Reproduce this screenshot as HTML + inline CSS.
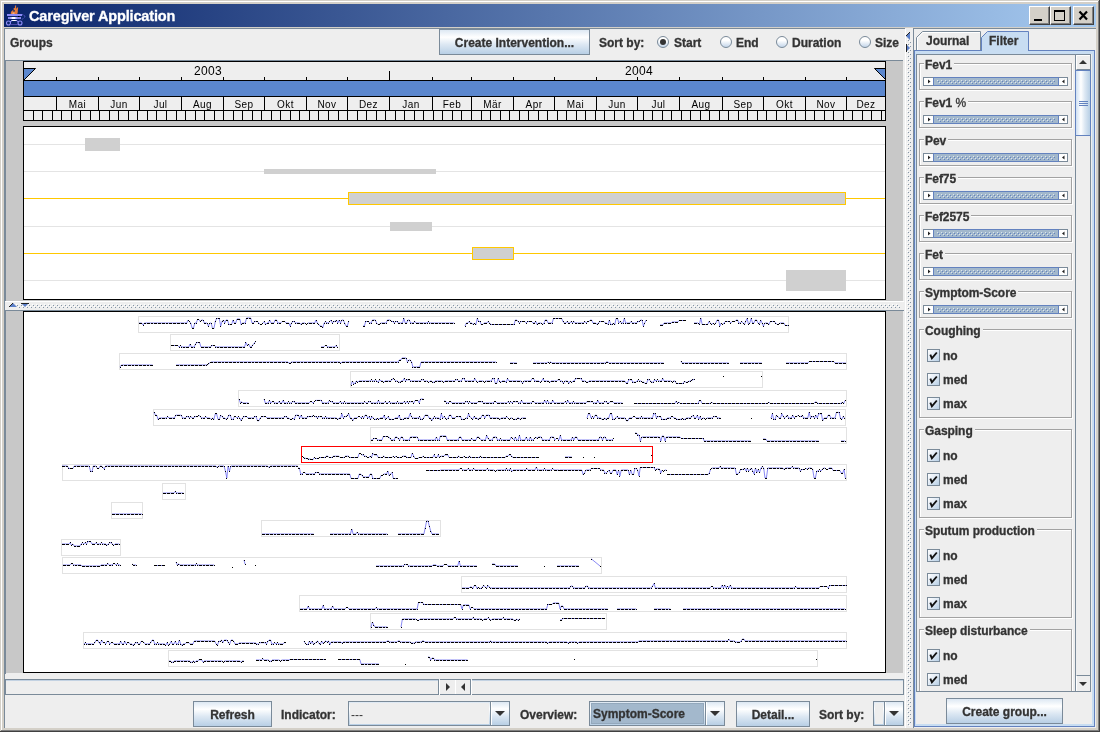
<!DOCTYPE html><html><head><meta charset="utf-8"><title>Caregiver Application</title><style>
*{box-sizing:border-box;margin:0;padding:0}
html,body{width:1100px;height:732px;overflow:hidden;background:#d4d0c8}
body{position:relative;font-family:"Liberation Sans",sans-serif;font-size:12px;font-weight:bold;color:#333;-webkit-text-stroke-width:0.3px}
.a{position:absolute}
.t{position:absolute;white-space:nowrap;line-height:14px;height:14px}
.btn{position:absolute;border:1px solid #7a8a99;background:linear-gradient(to bottom,#dde8f3 0%,#fff 30%,#dde8f3 60%,#b8cfe5 100%);text-align:center}
.btn span{position:absolute;left:0;right:0;white-space:nowrap}
.radio{position:absolute;width:12px;height:12px;border-radius:50%;border:1px solid #7a8a99;background:linear-gradient(to bottom,#fff 0%,#fff 35%,#c4d6ea 100%)}
.radio.on:after{content:"";position:absolute;left:2px;top:2px;width:6px;height:6px;border-radius:50%;background:#333}
.grp{position:absolute;left:920px;width:153px;border:1px solid #fff;}
.grp:before{content:"";position:absolute;left:-2px;top:-2px;right:0;bottom:0;border:1px solid #a2a2a2}
.grp b{position:absolute;left:3px;top:-7px;background:#eee;padding:0 2px 0 1px;line-height:14px;height:14px;font-weight:bold;white-space:nowrap;letter-spacing:-0.05px}
.grp b i{font-style:normal;font-weight:normal}
.cb{position:absolute;left:927px;width:13px;height:13px;border:1px solid #7a8a99;background:linear-gradient(135deg,#fff 0%,#e6eef7 40%,#b8cfe5 100%)}
.cbl{position:absolute;left:943px;white-space:nowrap;line-height:14px}
</style></head><body><div class="a" id="root" style="left:0;top:0;width:1100px;height:732px;will-change:transform;transform:translateZ(0)">
<div class="a" style="left:0px;top:0px;width:1100px;height:732px;background:#d4d0c8;"></div>
<div class="a" style="left:1px;top:1px;width:1097px;height:1px;background:#fff;"></div>
<div class="a" style="left:1px;top:1px;width:1px;height:729px;background:#fff;"></div>
<div class="a" style="left:1098px;top:1px;width:1px;height:730px;background:#808080;"></div>
<div class="a" style="left:1px;top:730px;width:1098px;height:1px;background:#808080;"></div>
<div class="a" style="left:1099px;top:0px;width:1px;height:732px;background:#404040;"></div>
<div class="a" style="left:0px;top:731px;width:1100px;height:1px;background:#404040;"></div>
<div class="a" style="left:4px;top:4px;width:1092px;height:23px;background:linear-gradient(to right,#0a246a 0%,#a6caf0 100%);"></div>
<div class="t" style="left:29px;top:7px;color:#fff;font-size:14.5px;line-height:19px;height:19px;letter-spacing:-0.15px">Caregiver Application</div>
<svg class="a" style="left:5px;top:5px" width="22" height="21" viewBox="0 0 22 21">
<path d="M6 9.500C5 7 7.500 5 9 4.500L8.500 3H9.800L10 0.500H11.200L11 4L12 2.500H13.200L12.800 5.500C13 7 12.500 8.500 12 9.500Z" fill="#e07a3a"/>
<path d="M7.500 7.500h2v2h-2z" fill="#f4b080"/><path d="M8 5.200h2v1.300h-2z" fill="#16306e"/>
<rect x="2" y="9" width="15" height="2" fill="#8c8cf8"/>
<rect x="3" y="12" width="13" height="2" fill="#8888f0"/><rect x="5.500" y="12" width="6" height="2" fill="#c8c8ff"/><rect x="7" y="12" width="3" height="2" fill="#fff"/>
<rect x="13" y="11" width="1.500" height="1" fill="#000"/>
<rect x="6" y="15" width="6" height="1" fill="#d8d8ff"/><rect x="7.500" y="15" width="3" height="1" fill="#fff"/>
<path d="M17 9.500L19.500 10.500L20 12L18.500 13.500L16.500 14.500" stroke="#5c5ccc" stroke-width="1" fill="none" stroke-dasharray="1 0.700"/>
<circle cx="3.500" cy="18" r="2" stroke="#8c8cf8" stroke-width="1.100" fill="none"/><circle cx="15" cy="18" r="2" stroke="#8c8cf8" stroke-width="1.100" fill="none"/>
<path d="M5.500 19.500H13" stroke="#4a4aa8" stroke-width="1"/><path d="M5 16.800L7 15.600M13.500 16.800L11.500 15.600" stroke="#8c8cf8" stroke-width="1"/>
</svg>
<div class="a" style="left:1029px;top:6px;width:21px;height:19px;background:#d4d0c8;border:1px solid;border-color:#fff #404040 #404040 #fff;box-shadow:inset -1px -1px 0 #808080"></div>
<div class="a" style="left:1034px;top:19px;width:8px;height:2px;background:#000;"></div>
<div class="a" style="left:1050px;top:6px;width:21px;height:19px;background:#d4d0c8;border:1px solid;border-color:#fff #404040 #404040 #fff;box-shadow:inset -1px -1px 0 #808080"></div>
<div class="a" style="left:1054px;top:10px;width:11px;height:11px;border:1px solid #000;border-top-width:2px"></div>
<div class="a" style="left:1073px;top:6px;width:21px;height:19px;background:#d4d0c8;border:1px solid;border-color:#fff #404040 #404040 #fff;box-shadow:inset -1px -1px 0 #808080"></div>
<svg class="a" style="left:1078px;top:10px" width="12" height="11" viewBox="0 0 12 11"><path d="M1.500 1.500l7.500 8M9 1.500l-7.500 8" stroke="#000" stroke-width="2.200" fill="none"/></svg>
<div class="a" style="left:4px;top:28px;width:1092px;height:700px;background:#eee;"></div>
<div class="a" style="left:4px;top:28px;width:901px;height:1px;background:#7a8a99;"></div>
<div class="a" style="left:4px;top:28px;width:1px;height:700px;background:#7a8a99;"></div>
<div class="t" style="left:10px;top:36px;">Groups</div>
<div class="btn" style="left:439px;top:29px;width:151px;height:26px"><span style="top:6px;line-height:14px">Create Intervention...</span></div>
<div class="t" style="left:599px;top:36px;">Sort by:</div>
<div class="radio on" style="left:657px;top:36px"></div>
<div class="t" style="left:674px;top:36px;">Start</div>
<div class="radio" style="left:720px;top:36px"></div>
<div class="t" style="left:736px;top:36px;">End</div>
<div class="radio" style="left:776px;top:36px"></div>
<div class="t" style="left:792px;top:36px;">Duration</div>
<div class="radio" style="left:859px;top:36px"></div>
<div class="t" style="left:875px;top:36px;">Size</div>
<div class="a" style="left:5px;top:60px;width:898px;height:1px;background:#7a8a99;"></div>
<div class="a" style="left:5px;top:60px;width:1px;height:241px;background:#7a8a99;"></div>
<div class="a" style="left:6px;top:61px;width:897px;height:240px;background:#c8c8c8;"></div>
<div class="a" style="left:23px;top:61px;width:863px;height:60px;background:#000;"></div>
<div class="a" style="left:24px;top:62px;width:861px;height:18px;background:#eee;"></div>
<div class="a" style="left:24px;top:81px;width:861px;height:15px;background:#5b87ce;"></div>
<div class="a" style="left:24px;top:97px;width:861px;height:13px;background:#eee;"></div>
<div class="a" style="left:24px;top:111px;width:861px;height:9px;background:#eee;"></div>
<svg class="a" style="left:0;top:0" width="905" height="125" shape-rendering="crispEdges"><path d="M56.5 77V80M56.5 97V110M98.5 77V80M98.5 97V110M139.5 77V80M139.5 97V110M181.5 77V80M181.5 97V110M223.5 77V80M223.5 97V110M264.5 77V80M264.5 97V110M306.5 77V80M306.5 97V110M347.5 77V80M347.5 97V110M389.5 71V80M389.5 97V110M432.5 77V80M432.5 97V110M471.5 77V80M471.5 97V110M513.5 77V80M513.5 97V110M554.5 77V80M554.5 97V110M596.5 77V80M596.5 97V110M637.5 77V80M637.5 97V110M679.5 77V80M679.5 97V110M722.5 77V80M722.5 97V110M763.5 77V80M763.5 97V110M805.5 77V80M805.5 97V110M846.5 77V80M846.5 97V110M33.5 111V120M42.5 111V120M52.5 111V120M61.5 111V120M71.5 111V120M80.5 111V120M90.5 111V120M99.5 111V120M109.5 111V120M118.5 111V120M128.5 111V120M137.5 111V120M147.5 111V120M156.5 111V120M166.5 111V120M176.5 111V120M185.5 111V120M195.5 111V120M204.5 111V120M214.5 111V120M223.5 111V120M233.5 111V120M242.5 111V120M252.5 111V120M261.5 111V120M271.5 111V120M280.5 111V120M290.5 111V120M299.5 111V120M309.5 111V120M318.5 111V120M328.5 111V120M338.5 111V120M347.5 111V120M357.5 111V120M366.5 111V120M376.5 111V120M385.5 111V120M395.5 111V120M404.5 111V120M414.5 111V120M423.5 111V120M433.5 111V120M442.5 111V120M452.5 111V120M461.5 111V120M471.5 111V120M481.5 111V120M490.5 111V120M500.5 111V120M509.5 111V120M519.5 111V120M528.5 111V120M538.5 111V120M547.5 111V120M557.5 111V120M566.5 111V120M576.5 111V120M585.5 111V120M595.5 111V120M604.5 111V120M614.5 111V120M624.5 111V120M633.5 111V120M643.5 111V120M652.5 111V120M662.5 111V120M671.5 111V120M681.5 111V120M690.5 111V120M700.5 111V120M709.5 111V120M719.5 111V120M728.5 111V120M738.5 111V120M747.5 111V120M757.5 111V120M766.5 111V120M776.5 111V120M786.5 111V120M795.5 111V120M805.5 111V120M814.5 111V120M824.5 111V120M833.5 111V120M843.5 111V120M852.5 111V120M862.5 111V120M871.5 111V120M881.5 111V120" stroke="#000" stroke-width="1" fill="none"/><path d="M24 68H36L24 80Z" fill="#5b87ce" stroke="none" shape-rendering="geometricPrecision"/><path d="M24 68.500H35.500L24 80" fill="none" stroke="#000" stroke-width="1" shape-rendering="geometricPrecision"/><path d="M885 68H874L885 79Z" fill="#5b87ce" stroke="none" shape-rendering="geometricPrecision"/><path d="M885 68.500H874.500L885 79" fill="none" stroke="#000" stroke-width="1" shape-rendering="geometricPrecision"/></svg>
<div class="t" style="left:57px;top:98px;width:41px;text-align:center;-webkit-text-stroke-width:0;font-weight:normal;font-size:10px;line-height:13px;height:13px;color:#000;letter-spacing:0.4px">Mai</div>
<div class="t" style="left:99px;top:98px;width:40px;text-align:center;-webkit-text-stroke-width:0;font-weight:normal;font-size:10px;line-height:13px;height:13px;color:#000;letter-spacing:0.4px">Jun</div>
<div class="t" style="left:140px;top:98px;width:41px;text-align:center;-webkit-text-stroke-width:0;font-weight:normal;font-size:10px;line-height:13px;height:13px;color:#000;letter-spacing:0.4px">Jul</div>
<div class="t" style="left:182px;top:98px;width:41px;text-align:center;-webkit-text-stroke-width:0;font-weight:normal;font-size:10px;line-height:13px;height:13px;color:#000;letter-spacing:0.4px">Aug</div>
<div class="t" style="left:224px;top:98px;width:40px;text-align:center;-webkit-text-stroke-width:0;font-weight:normal;font-size:10px;line-height:13px;height:13px;color:#000;letter-spacing:0.4px">Sep</div>
<div class="t" style="left:265px;top:98px;width:41px;text-align:center;-webkit-text-stroke-width:0;font-weight:normal;font-size:10px;line-height:13px;height:13px;color:#000;letter-spacing:0.4px">Okt</div>
<div class="t" style="left:307px;top:98px;width:40px;text-align:center;-webkit-text-stroke-width:0;font-weight:normal;font-size:10px;line-height:13px;height:13px;color:#000;letter-spacing:0.4px">Nov</div>
<div class="t" style="left:348px;top:98px;width:41px;text-align:center;-webkit-text-stroke-width:0;font-weight:normal;font-size:10px;line-height:13px;height:13px;color:#000;letter-spacing:0.4px">Dez</div>
<div class="t" style="left:390px;top:98px;width:42px;text-align:center;-webkit-text-stroke-width:0;font-weight:normal;font-size:10px;line-height:13px;height:13px;color:#000;letter-spacing:0.4px">Jan</div>
<div class="t" style="left:433px;top:98px;width:38px;text-align:center;-webkit-text-stroke-width:0;font-weight:normal;font-size:10px;line-height:13px;height:13px;color:#000;letter-spacing:0.4px">Feb</div>
<div class="t" style="left:472px;top:98px;width:41px;text-align:center;-webkit-text-stroke-width:0;font-weight:normal;font-size:10px;line-height:13px;height:13px;color:#000;letter-spacing:0.4px">Mär</div>
<div class="t" style="left:514px;top:98px;width:40px;text-align:center;-webkit-text-stroke-width:0;font-weight:normal;font-size:10px;line-height:13px;height:13px;color:#000;letter-spacing:0.4px">Apr</div>
<div class="t" style="left:555px;top:98px;width:41px;text-align:center;-webkit-text-stroke-width:0;font-weight:normal;font-size:10px;line-height:13px;height:13px;color:#000;letter-spacing:0.4px">Mai</div>
<div class="t" style="left:597px;top:98px;width:40px;text-align:center;-webkit-text-stroke-width:0;font-weight:normal;font-size:10px;line-height:13px;height:13px;color:#000;letter-spacing:0.4px">Jun</div>
<div class="t" style="left:638px;top:98px;width:41px;text-align:center;-webkit-text-stroke-width:0;font-weight:normal;font-size:10px;line-height:13px;height:13px;color:#000;letter-spacing:0.4px">Jul</div>
<div class="t" style="left:680px;top:98px;width:42px;text-align:center;-webkit-text-stroke-width:0;font-weight:normal;font-size:10px;line-height:13px;height:13px;color:#000;letter-spacing:0.4px">Aug</div>
<div class="t" style="left:723px;top:98px;width:40px;text-align:center;-webkit-text-stroke-width:0;font-weight:normal;font-size:10px;line-height:13px;height:13px;color:#000;letter-spacing:0.4px">Sep</div>
<div class="t" style="left:764px;top:98px;width:41px;text-align:center;-webkit-text-stroke-width:0;font-weight:normal;font-size:10px;line-height:13px;height:13px;color:#000;letter-spacing:0.4px">Okt</div>
<div class="t" style="left:806px;top:98px;width:40px;text-align:center;-webkit-text-stroke-width:0;font-weight:normal;font-size:10px;line-height:13px;height:13px;color:#000;letter-spacing:0.4px">Nov</div>
<div class="t" style="left:847px;top:98px;width:38px;text-align:center;-webkit-text-stroke-width:0;font-weight:normal;font-size:10px;line-height:13px;height:13px;color:#000;letter-spacing:0.4px">Dez</div>
<div class="t" style="left:188px;top:64px;width:40px;text-align:center;font-weight:normal;color:#000;letter-spacing:0.3px;-webkit-text-stroke-width:0">2003</div>
<div class="t" style="left:619px;top:64px;width:40px;text-align:center;font-weight:normal;color:#000;letter-spacing:0.3px;-webkit-text-stroke-width:0">2004</div>
<div class="a" style="left:23px;top:126px;width:863px;height:174px;background:#000;"></div>
<div class="a" style="left:24px;top:127px;width:861px;height:172px;background:#fff;"></div>
<div class="a" style="left:24px;top:144px;width:861px;height:1px;background:#e4e4e4;"></div>
<div class="a" style="left:24px;top:171px;width:861px;height:1px;background:#e4e4e4;"></div>
<div class="a" style="left:24px;top:226px;width:861px;height:1px;background:#e4e4e4;"></div>
<div class="a" style="left:24px;top:280px;width:861px;height:1px;background:#e4e4e4;"></div>
<div class="a" style="left:24px;top:198px;width:861px;height:1px;background:#ffc800;"></div>
<div class="a" style="left:24px;top:253px;width:861px;height:1px;background:#ffc800;"></div>
<div class="a" style="left:85px;top:138px;width:35px;height:13px;background:#d0d0d0;"></div>
<div class="a" style="left:264px;top:169px;width:172px;height:5px;background:#d0d0d0;"></div>
<div class="a" style="left:348px;top:192px;width:498px;height:13px;background:#d0d0d0;border:1px solid #ffc800"></div>
<div class="a" style="left:390px;top:222px;width:42px;height:9px;background:#d0d0d0;"></div>
<div class="a" style="left:472px;top:247px;width:42px;height:13px;background:#d0d0d0;border:1px solid #ffc800"></div>
<div class="a" style="left:786px;top:270px;width:60px;height:21px;background:#d0d0d0;"></div>
<svg class="a" style="left:5px;top:301px" width="899" height="9" shape-rendering="crispEdges"><defs><pattern id="dp" x="11" y="3" width="4" height="4" patternUnits="userSpaceOnUse"><rect x="1" y="1" width="1" height="1" fill="#8494a5"/><rect x="0" y="0" width="1" height="1" fill="#fff"/><rect x="3" y="3" width="1" height="1" fill="#8494a5"/><rect x="2" y="2" width="1" height="1" fill="#fff"/></pattern></defs><rect width="899" height="9" fill="#eee"/><rect width="899" height="1" fill="#fff"/><rect x="11" y="3" width="884" height="4" fill="url(#dp)"/><g shape-rendering="geometricPrecision"><path d="M4 6L8 2L12 6Z" fill="#5b7fc8"/><path d="M4 6L8 2" stroke="#222" stroke-width="1" fill="none"/><path d="M16 2H24L20 6Z" fill="#5b7fc8"/><path d="M16 2.500H24" stroke="#222" stroke-width="1" fill="none"/></g></svg>
<div class="a" style="left:5px;top:310px;width:899px;height:1px;background:#7a8a99;"></div>
<div class="a" style="left:5px;top:310px;width:1px;height:364px;background:#7a8a99;"></div>
<div class="a" style="left:6px;top:311px;width:897px;height:362px;background:#c8c8c8;"></div>
<div class="a" style="left:23px;top:311px;width:863px;height:362px;background:#000;"></div>
<div class="a" style="left:24px;top:312px;width:861px;height:360px;background:#fff;"></div>
<svg class="a" style="left:0;top:311px" width="905" height="362" viewBox="0 311 905 362"><path d="M138.5 316.5H788.5V332.5H138.5ZM170.5 334.5H339.5V350.5H170.5ZM119.5 353.5H846.5V369.5H119.5ZM350.5 371.5H762.5V387.5H350.5ZM238.5 390.5H846.5V406.5H238.5ZM153.5 409.5H845.5V425.5H153.5ZM370.5 427.5H846.5V443.5H370.5ZM62.5 464.5H846.5V480.5H62.5ZM162.5 483.5H185.5V499.5H162.5ZM111.5 502.5H142.5V518.5H111.5ZM261.5 520.5H440.5V536.5H261.5ZM61.5 539.5H120.5V555.5H61.5ZM62.5 557.5H601.5V573.5H62.5ZM461.5 576.5H846.5V592.5H461.5ZM299.5 595.5H846.5V611.5H299.5ZM370.5 613.5H606.5V629.5H370.5ZM83.5 632.5H846.5V648.5H83.5ZM168.5 650.5H817.5V666.5H168.5Z" stroke="#e2e2e2" fill="none" shape-rendering="crispEdges"/><path d="M301.5 446.5H652.5V462.5H301.5Z" stroke="#f00" fill="none" shape-rendering="crispEdges"/><path d="M139 323L141.7 323L143.1 325L144.4 323L186.7 323L188 320L189.4 321.5L190.7 323L192.1 328L193.5 328L194.8 323L196.2 323L197.6 319.5L198.9 319.5L200.3 321.5L201.6 320L203 320L204.4 323L207.1 323L208.4 326L209.8 323L211.2 323L212.5 328.5L213.9 328.5L215.3 321.5L216.6 318.5L219.3 318.5L220.7 326L222.1 321.5L223.4 320L224.8 323L226.1 320L227.5 320L228.9 324.5L231.6 324.5L233 320L234.3 323L235.7 323L237 319L239.8 319L241.1 324.5L242.5 323L245.2 323L246.6 318L250.7 318L252 323L253.4 323L254.7 321.5L257.5 321.5L258.8 323L260.2 324.5L261.6 324.5L262.9 323L264.3 321.5L265.6 324.5L267 323L268.4 323L269.7 320L271.1 323L273.8 323L275.2 320L276.5 320L277.9 323L280.6 323L282 321.5L284.7 321.5L286.1 323L288.8 323L290.1 326L291.5 323L292.9 321.5L294.2 321.5L295.6 323L299.7 323L301 324.5L302.4 323L305.1 323L306.5 324.5L307.9 323L314.7 323L316 320L317.4 323L318.7 324.5L320.1 326L321.5 326L322.8 327.5L324.2 323L325.6 321.5L326.9 323L328.3 323L329.6 321.5L331 320L332.4 323L333.7 321.5L335.1 321.5L336.4 320L337.8 323L339.2 320L340.5 323L341.9 320L343.3 320L344.6 323L346 326L347.3 326L348.7 321.5M363 326L364.4 326L365.7 321.5L368.4 321.5L369.8 323L371.2 323L372.5 320L375.3 320L376.6 323L378 324.5L379.3 324.5L380.7 323L386.1 323L387.5 320L390.2 320L391.6 321.5L393 321.5L394.3 323L395.7 321.5L397 321.5L398.4 323L402.5 323L403.9 318.5L405.2 323L406.6 323L407.9 320L409.3 320L410.7 323L413.4 323L414.7 321.5L416.1 323L427 323L428.4 321.5L429.7 323L454.2 323M465 326L466.4 323L467.7 323L469.1 321.5L470.4 323L471.8 323L473.2 324.5L474.5 323L475.9 324.5L477.3 318.5L478.6 321.5L480 321.5L481.3 324.5L482.7 324.5L484.1 323L486.8 323L488.1 321.5L489.5 323L490.9 324.5L514 324.5L515.4 320L516.7 320L518.1 321.5L519.5 323L520.8 321.5L524.9 321.5L526.3 323L527.6 321.5L531.7 321.5L533.1 323L534.4 323L535.8 321.5L537.2 324.5L538.5 323L541.3 323L542.6 324.5L544 323L545.3 320L546.7 320L548.1 323L552.1 323L553.5 318.5L561.7 318.5L563 321.5L564.4 323L565.8 323L567.1 321.5L568.5 323L569.9 323L571.2 321.5L572.6 323L573.9 321.5L575.3 323L583.5 323L584.8 321.5L586.2 323L587.6 321.5L588.9 321.5L590.3 320L591.6 320L593 323L595.7 323L597.1 324.5L598.4 323L599.8 321.5L603.9 321.5L605.3 323L606.6 323L608 324.5L609.3 320L610.7 324.5L612.1 324.5L613.4 323L614.8 324.5L616.1 318.5L617.5 318.5L618.9 323L620.2 321.5L621.6 323L623 323L624.3 318.5L625.7 323L629.8 323L631.1 321.5L632.5 323L636.6 323L637.9 321.5L639.3 321.5L640.7 320L642 320L643.4 326L644.7 323L646.1 320M660 325L662.7 325L664.1 323L670.9 323L672.3 322L677.7 322L679.1 320.5L685.9 320.5M694 323L698.1 323L699.4 324.5L700.8 318L702.2 324.5L707.6 324.5L709 321.5L710.3 323L711.7 324.5L713.1 323L714.4 324.5L715.8 323L717.1 320L718.5 320L719.9 326L721.2 323L722.6 324.5L724 323L725.3 321.5L729.4 321.5L730.8 323L732.1 321.5L734.9 321.5L736.2 320L737.6 320L738.9 323L740.3 323L741.7 321.5L743 323L744.4 324.5L745.7 321.5L747.1 318.5L748.5 324.5L749.8 323L751.2 318.5L752.6 323L753.9 323L755.3 320L756.6 320L758 323L759.4 324.5L760.7 320L762.1 323L763.4 326L764.8 323L767.5 323L768.9 324.5L770.3 321.5L774.3 321.5L775.7 323L777.1 324.5L778.4 324.5L779.8 323L783.9 323L785.2 325.5L788 325.5M171 345.5L177.8 345.5L179.2 347L180.5 345.5L181.9 347L188.7 347L190.1 344L191.4 347L194.1 347L195.5 344L196.9 342.5L199.6 342.5L201 347L210.5 347L211.9 345.5L214.6 345.5L215.9 347L244.5 347L245.9 342.5L247.3 345.5L248.6 344L250 347L251.3 347L252.7 345.1L254.1 343.4L255.4 341.7M321 347L323.7 347L325.1 345.5L326.4 345.5L327.8 347L334.6 347L336 345.5L337.3 347M120 367L121.4 365L152.7 365M176 365L206 365L207.3 364.8L208.7 363.7L210 362.7L211.4 362L287.7 362L289 363L290.4 363L291.7 362L339.4 362L340.8 363L342.1 362L398 362L399.3 360L400.7 360L402 358L406.1 358L407.5 362L408.9 360L410.2 360L411.6 362L412.9 367L419.7 367L421.1 362L496 362M510 363L516.8 363M533 363L546.6 363L548 362L549.3 363L550.7 362L552.1 363L605.2 363L606.5 362L607.9 362L609.3 363L663.7 363M681 361.5L682.4 363L728.7 363M740 363L761.8 363M786 363L807.8 363L809.1 361.5L833.7 361.5L835 363L845.9 363M351 385L352.4 381L353.7 384L355.1 383L356.4 381L357.8 382L359.2 381L370.1 381L371.4 379.8L372.8 381L374.1 381L375.5 379.8L376.9 381L378.2 382.2L379.6 379.8L381 381L382.3 381L383.7 382.2L385 381L390.5 381L391.9 379.8L393.2 378.6L394.6 379.8L395.9 381L397.3 381L398.7 382.2L400 382.2L401.4 381L402.7 381L404.1 378.6L405.5 381L406.8 379.8L409.6 379.8L410.9 381L420.4 381L421.8 379.8L423.2 379.8L424.5 381L427.3 381L428.6 382.2L430 381L431.3 381L432.7 382.2L434.1 382.2L435.4 381L442.2 381L443.6 382.2L445 381L454.5 381L455.9 379.8L457.2 379.8L458.6 381L461.3 381L462.7 378.6L464 378.6L465.4 381L473.6 381L474.9 378.6L476.3 381L477.6 382.2L479 381L483.1 381L484.4 382.2L485.8 381L491.3 381L492.6 378.6L494 378.6L495.3 383.4L496.7 383.4L498.1 378.6L499.4 381L500.8 382.2L502.1 381L504.9 381L506.2 382.2L507.6 378.6L509 381L521.2 381L522.6 383.4L523.9 381L530.7 381L532.1 378.6L533.5 378.6L534.8 381L538.9 381L540.3 382.2L541.6 381L543 378.6L544.4 381L548.4 381L549.8 382.2L551.2 381L556.6 381L558 379.8L559.3 379.8L560.7 381L562.1 381L563.4 383.4L564.8 381L567.5 381L568.9 383.4L570.2 381L571.6 382.2L573 381L574.3 381L575.7 378.6L581.1 378.6L582.5 381L585.2 381L586.6 382.2L587.9 382.2L589.3 381L624.7 381L626.1 383L627.4 383L628.8 379.8L631.5 379.8L632.9 382.2L635.6 382.2L637 381L638.3 379.8L639.7 381L641 381L642.4 382.2L643.8 382.2L645.1 383.4L646.5 383.4L647.9 379.8L649.2 379.8L650.6 381L651.9 382.2L653.3 382.2L654.7 379.8L656 381L657.4 379.8L658.7 381L661.5 381L662.8 378.6L664.2 381L671 381L672.4 382.2L673.7 381L675.1 381L676.4 383.5L683.3 383.5L684.6 381L686 382.6L687.3 382.1L688.7 381.5L690.1 381L691.4 380.4L692.8 379.9L694.1 379.3M239 399L240.4 403L241.7 402L243.1 403L248.5 403M264 399.1L265.4 403L268.1 403L269.4 400.4L270.8 403L272.2 401.7L273.5 401.7L274.9 403L277.6 403L279 401.7L280.3 403L281.7 403L283.1 400.4L284.4 403L287.1 403L288.5 401.7L289.9 403L291.2 403L292.6 401.7L294 401.7L295.3 403L308.9 403L310.3 401.7L311.7 401.7L313 403L314.4 401.7L315.7 400.4L321.2 400.4L322.6 403L328 403L329.4 400.4L330.7 401.7L332.1 401.7L333.4 403L338.9 403L340.3 401.7L341.6 403L343 403L344.3 401.7L345.7 403L363.4 403L364.8 401.7L366.1 403L367.5 403L368.9 401.7L370.2 401.7L371.6 403L377 403L378.4 400.4L379.7 403L383.8 403L385.2 401.7L386.6 403L387.9 403L389.3 401.7L390.6 403L396.1 403L397.4 401.7L398.8 403L402.9 403L404.3 401.7L405.6 403L407 401.7L408.3 403L409.7 401.7L412.4 401.7L413.8 403L415.1 400.5L417.9 400.5L419.2 403L420.6 399L423.3 399M444 401L445.4 401L446.7 403L448.1 403L449.4 401.7L450.8 401.7L452.2 403L464.4 403L465.8 401.7L467.1 401.7L468.5 403L469.9 401.7L471.2 403L476.7 403L478 401.7L482.1 401.7L483.5 403L493 403L494.4 401.7L495.7 401.7L497.1 403L506.6 403L508 401.7L509.4 403L510.7 401.7L512.1 403L513.4 401.7L517.5 401.7L518.9 403L520.3 403L521.6 400.4L523 403L531.1 403L532.5 401.7L533.9 401.7L535.2 403L543.4 403L544.8 400.4L546.1 403L547.5 400.4L548.9 403L551.6 403L552.9 400.4L554.3 403L563.8 403L565.2 401.7L566.6 403L567.9 400.4L569.3 403L572 403L573.4 401.7L574.7 403L585.6 403L587 401.7L592.4 401.7L593.8 403L596.5 403L597.9 400.4L599.2 403L603.3 403L604.7 401.7L606 401.7L607.4 403L608.8 403L610.1 401.7L612.9 401.7L614.2 403L622.4 403M634 403.5L674.9 403.5L676.2 401L677.6 403.5L678.9 402L680.3 403.5L698 403.5L699.4 400.5L700.7 400.5L702.1 403.5L710.3 403.5L711.6 402L713 403.5L767.4 403.5L768.8 402L770.2 403.5L813.7 403.5L815.1 402L816.5 402L817.8 403.5L841 403.5L842.3 402L843.7 403.5L845.1 400.5M154 412L155.4 415.2L156.7 415.2L158.1 419.4L159.4 418L166.3 418L167.6 416.6L169 418L174.4 418L175.8 415.2L181.2 415.2L182.6 418L185.3 418L186.7 416.6L188 416.6L189.4 418L190.8 416.6L192.1 418L193.5 418L194.9 416.6L197.6 416.6L198.9 415.2L200.3 416.6L201.7 418L204.4 418L205.7 416.6L207.1 418L209.8 418L211.2 419.4L212.6 418L213.9 419.4L215.3 413.8L216.6 413.8L218 419.4L219.4 419.4L220.7 415.2L222.1 416.6L223.4 418L224.8 418L226.2 419.4L227.5 418L228.9 415.2L230.3 415.2L231.6 419.4L233 419.4L234.3 416.6L235.7 416.6L237.1 418L238.4 416.6L239.8 418L241.1 420.8L242.5 418L243.9 416.6L246.6 416.6L248 418L253.4 418L254.8 416.6L256.1 416.6L257.5 420.8L258.9 420.8L260.2 418L261.6 416.6L265.7 416.6L267 418L283.4 418L284.7 416.6L286.1 416.6L287.4 418L288.8 418L290.2 419.4L291.5 419.4L292.9 418L294.3 419.4L295.6 415.2L298.3 415.2L299.7 418L301.1 415.2L302.4 418L306.5 418L307.9 416.6L312 416.6L313.3 415.2L314.7 416.6L316 416.6L317.4 418L318.8 416.6L321.5 416.6L322.9 418L324.2 418L325.6 416.6L326.9 418L336.5 418L337.8 419.4L339.2 418L340.6 418L341.9 413.8L343.3 418L344.6 416.6L346 416.6L347.4 415.2L348.7 413.8L350.1 418L351.4 418L352.8 420.8L354.2 418L356.9 418L358.3 416.6L359.6 416.6L361 418L362.3 416.6L363.7 418L365.1 415.2L366.4 415.2L367.8 418L369.1 416.6L370.5 419.4L371.9 416.6L373.2 418L374.6 419.4L376 419.4L377.3 418L378.7 419.4L380 418L382.8 418L384.1 415.2L385.5 419.4L386.9 418L388.2 416.6L389.6 419.4L393.7 419.4L395 418L397.7 418L399.1 415.2L400.5 419.4L403.2 419.4L404.6 418L408.6 418L410 413.8L411.4 416.6L412.7 418L418.2 418L419.5 416.6L420.9 419.4L422.3 419.4L423.6 418L425 415.2L427.7 415.2L429.1 418L430.4 418L431.8 420.8L433.1 418L434.5 416.6L435.9 418L438.6 418L440 419.4L441.3 413.8L442.7 418L444 416.6L445.4 418L446.8 419.4L448.1 418L449.5 415.2L450.9 415.2L452.2 418L454.9 418L456.3 416.6L460.4 416.6L461.7 419.4L464.5 419.4L465.8 418L467.2 418L468.6 413.8L469.9 416.6L471.3 418L472.6 419.4L474 416.6L475.4 418L476.7 418L478.1 419.4L479.4 418L480.8 418L482.2 415.2L483.5 415.2L484.9 418L486.3 415.2L489 415.2L490.3 418L498.5 418L499.9 419.4L501.2 418L505.3 418L506.7 416.6L508 418L509.4 419.4L510.8 418L512.1 418L513.5 419.4L516.2 419.4L517.6 418L518.9 418L520.3 419.4L521.7 418L525.7 418M587 418L588.4 413.8L589.7 413.8L591.1 418L592.4 416.6L593.8 418L595.2 415.2L596.5 415.2L597.9 418L600.6 418L602 419.4L603.3 419.4L604.7 418L606.1 419.4L607.4 418L608.8 418L610.1 413.8L611.5 413.8L612.9 419.4L614.2 419.4L615.6 418L617 416.6L618.3 418L625.1 418L626.5 420.8L627.9 420.8L629.2 418L631.9 418L633.3 416.6L634.7 416.6L636 418L640.1 418L641.5 416.6L642.8 418L652.4 418L653.7 413.8L655.1 413.8L656.4 418L657.8 416.6L660.5 416.6L661.9 419.4L666 419.4L667.3 418L670.1 418L671.4 416.6L672.8 416.6L674.1 418L675.5 418L676.9 419.4L681 419.4L682.3 418L683.7 419.4L685 419.4L686.4 418L690.5 418L691.9 416.6L693.2 415.2L694.6 418L695.9 418L697.3 415.2L698.7 419.4L700 416.6L701.4 419.4L702.7 418L704.1 418L705.5 419.4L706.8 418L712.3 418L713.6 416.6L716.4 416.6L717.7 418L720.4 418M771 418L772.4 413.8L773.7 419.4L775.1 419.4L776.4 415.2L777.8 416.6L779.2 418L780.5 418L781.9 413.8L783.3 416.6L784.6 418L786 416.6L787.3 415.2L788.7 418L791.4 418L792.8 415.2L794.1 418L795.5 416.6L796.9 416.6L798.2 415.2L799.6 416.6L801 416.6L802.3 415.2L803.7 418L807.8 418L809.1 412.4L810.5 418L811.9 416.6L813.2 416.6L814.6 418L815.9 415.2L817.3 418L818.7 413.8L821.4 413.8L822.7 420.8L824.1 418L826.8 418L828.2 415.2L829.6 415.2L830.9 418L835 418L836.4 412.4L839.1 412.4L840.4 418L841.8 419.4L843.2 416.6L844.5 418M371 440L372.4 440L373.7 438.5L376.4 438.5L377.8 440L381.9 440L383.3 436.5L387.3 436.5L388.7 437L390.1 438.5L391.4 440L394.1 440L395.5 437L396.9 437L398.2 438.5L399.6 440L401 437L402.3 437L403.7 440L409.1 440L410.5 437L417.3 437L418.7 440L435 440L436.4 437L437.7 440L439.1 440L440.4 436L445.9 436L447.3 440L458.1 440L459.5 437L460.9 437L462.2 440L470.4 440L471.8 438.5L473.1 440L475.9 440L477.2 437L478.6 437L479.9 438.5L481.3 440L485.4 440L486.7 435.5L488.1 438.5L489.5 440L492.2 440L493.6 437L496.3 437L497.6 440L499 440L500.4 438.5L501.7 440L509.9 440L511.3 437L512.6 438.5L514 440L515.3 437L516.7 440L518.1 440L519.4 435.5L520.8 440L524.9 440L526.2 437L527.6 440L529 440L530.3 437L531.7 440L533 440L534.4 438.5L535.8 437L537.1 438.5L538.5 437L541.2 437L542.6 440L549.4 440L550.7 437L553.5 437L554.8 440L556.2 438.5L557.6 438.5L558.9 440L560.3 435.5L561.6 440L571.2 440L572.5 437L573.9 440L575.3 437L576.6 437L578 440L598.4 440L599.8 437L601.1 437L602.5 440L603.9 437L605.2 437L606.6 440L612 440L613.4 438.5M635 433L636.4 433L637.7 435L639.1 435L640.4 441L641.8 437L659.5 437L660.9 441L662.2 436L663.6 436L665 441L666.3 437L679.9 437L681.3 438.5L703.1 438.5L704.4 441L750.7 441M763 439L765.7 439L767.1 441L818.8 441M841 441L845.1 441M302 456L303.4 457.5L304.7 458.1L306.1 458.4L307.4 458.7L308.8 459L310.2 459.2L311.5 459.5L312.9 459.8L314.3 457.5L315.6 458.5L318.3 458.5L319.7 457.5L325.1 457.5L326.5 456.2L327.9 456.2L329.2 457.5L332 457.5L333.3 456.2L338.8 456.2L340.1 457.5L344.2 457.5L345.6 456.2L348.3 456.2L349.7 457.5L357.8 457.5L359.2 453.5L360.6 453.5L361.9 454.9L363.3 454.9L364.6 456.2L366 456.2L367.4 457.5L368.7 457.5L370.1 456.2L371.4 457.5L372.8 453.5L374.2 454.9L376.9 454.9L378.3 457.5L382.3 457.5L383.7 456.2L385.1 457.5L391.9 457.5L393.2 456.2L394.6 457.5L396 456.2L397.3 457.5L401.4 457.5L402.8 456.2L405.5 456.2L406.9 457.5L410.9 457.5L412.3 453L413.7 456.2L415 458.5L417.7 458.5L419.1 457.5L421.8 457.5L423.2 456.2L424.6 457.5L432.7 457.5L434.1 454.9L435.4 457.5L436.8 457.5L438.2 454.9L439.5 457.5L440.9 456.2L443.6 456.2L445 454.9L447.7 454.9L449.1 457.5L457.2 457.5L458.6 456.2L460 457.5L462.7 457.5L464 456.2L465.4 457.5L468.1 457.5L469.5 456.2L470.9 457.5L479 457.5L480.4 456.2L481.7 457.5L504.9 457.5L506.3 456.2L507.6 456.2L509 454.9L510.3 454.9L511.7 456.2L513.1 457.5L538.9 457.5M565 457L571.8 457M62 466L67.4 466L68.8 468.5L72.9 468.5L74.3 466L89.2 466L90.6 471.5L92 471.5L93.3 466L96 466L97.4 468.5L98.8 468.5L100.1 466L101.5 466L102.9 467.5L104.2 469L105.6 466L215.9 466L217.2 467.5L218.6 466L224 466L225.4 471L226.8 478L228.1 466L229.5 471L230.9 466L267.6 466L269 467.5L270.3 466L297.6 466M298 468L299.4 468L300.7 474L302.1 474L303.4 472.5L304.8 472.5L306.2 474L314.3 474L315.7 472.5L318.4 472.5L319.8 474L349.7 474L351.1 478.5L357.9 478.5L359.3 474L360.6 474L362 475.5L363.4 477L368.8 477L370.2 474L371.5 474L372.9 478.5L379.7 478.5L381.1 475.5L382.4 475.5L383.8 474L386.5 474L387.9 471L389.2 475.5L390.6 474L392 472.5L393.3 478.5L397.4 478.5M426 470.5L439.6 470.5L441 470L458.7 470L460 468.5L461.4 468.5L462.8 470L466.9 470L468.2 468.5L469.6 470L472.3 470L473.7 468.5L475 470L485.9 470L487.3 468.5L488.6 470L494.1 470L495.4 471.5L496.8 470L505 470L506.3 468.5L507.7 470L509.1 470L510.4 468.5L511.8 471.5L513.1 470L525.4 470L526.8 468.5L528.1 470L534.9 470L536.3 467L537.7 470L543.1 470L544.5 468.5L545.8 470L551.3 470L552.6 468.5L554 470L559.4 470M560 470L581.8 470L583.1 474.5L584.5 473L585.9 470L590 470L591.3 468.5L599.5 468.5L600.9 470L603.6 470L604.9 473L606.3 473L607.7 471.5L609 470L610.4 473L611.7 473L613.1 470L615.8 470L617.2 474.5L618.6 470L619.9 476L621.3 470L628.1 470L629.4 474.5L630.8 470L632.2 474.5L633.5 474.5L634.9 468.5L636.3 468.5L637.6 470L639 476L640.3 467.5L654 467.5L655.3 470L656.7 469L659.4 469L660.8 473L662.1 470L663.5 471.5L664.9 470L666.2 470M667 474.5L707.9 474.5L709.2 473.4L710.6 469.3L711.9 468L718.7 468L720.1 466.5L721.5 468L735.1 468L736.4 474L737.8 474L739.2 472.5L740.5 469.5L743.3 469.5L744.6 468L746 471L747.3 468L748.7 471L750.1 469.5L751.4 468L752.8 471L754.1 474L755.5 468L756.9 472.5L758.2 469.5L759.6 472.5L761 468L762.3 466.5L763.7 468L765 478L766.4 478L767.8 468L782.7 468L784.1 469.5L785.5 468L790.9 468L792.3 466.5L793.6 468L799.1 468L800.4 471L801.8 469.5L804.5 469.5L805.9 468L807.3 469.5L808.6 468L811.3 468L812.7 469.5L814.1 478L815.4 478L816.8 471L818.1 471L819.5 469.5L820.9 471L822.2 469.5L823.6 468L825 468L826.3 469.5L827.7 469.5L829 468L831.8 468L833.1 470.5L839.9 470.5L841.3 473L842.7 473L844 469.5L845.4 478M163 493L173.9 493L175.3 491.5L176.6 493L183.4 493M112 514L142 514M262 534L313.7 534M330 534L350.4 534L351.8 529L353.1 534L355.9 534L357.2 532L358.6 534L387.2 534M398 534L423.9 534L425.2 528L426.6 521L428 521L429.3 526L430.7 531L432 534L438.9 534M62 544L68.8 544L70.2 542.8L71.5 545.2L72.9 544L74.3 546L79.7 546L81.1 544L82.4 542.8L83.8 544L85.1 542.8L86.5 544L87.9 541.6L90.6 541.6L92 544L94.7 544L96 542.8L97.4 544L100.1 544L101.5 542.8L102.9 544L105.6 544L106.9 545.2L108.3 544L109.7 542.8L111 542.8L112.4 544L113.7 545.2L115.1 544L119.2 544M63 565L69.8 565L71.2 563.7L72.5 563.7L73.9 565L80.7 565L82.1 566L99.8 566L101.1 565L106.6 565L107.9 563.7L109.3 565L112 565L113.4 563.7L114.7 563.7L116.1 565L117.5 563.7L118.8 565L120.2 565M132 564L133.4 565L136.1 565M154 565.5L164.9 565.5M176 562L177.4 565L178.7 564L180.1 565L195.1 565L196.4 563.7L197.8 565L214.1 565M244 560L245 564M376 566L403.2 566L404.6 564.5L407.3 564.5L408.7 566L431.8 566L433.2 565L435.9 565L437.3 566L442.7 566L444.1 564.5L446.8 564.5L448.2 566L457.7 566L459.1 561L460.4 566L476.8 566M492 564L494.7 564L496.1 566L517.9 566M557 566L578.8 566M591.5 559L600 566M462 588L468.8 588L470.2 587L471.5 587L472.9 588.5L474.3 585.5L475.6 585.5L477 588.5L478.3 587L479.7 588.5L481.1 588.5L482.4 587L483.8 585.5L485.1 587L486.5 588.5L487.9 585.5L489.2 587L490.6 588L569.6 588L570.9 586L572.3 586L573.7 588L584.6 588L585.9 586.5L587.3 586L588.6 588L651.3 588L652.6 586L654 583.5L655.4 588L709.8 588L711.2 586.5L712.6 586.5L713.9 588L720.7 588L722.1 585L723.4 588L724.8 585L726.2 588L727.5 586L728.9 588L730.3 585L731.6 588L794.3 588L795.6 586.5L797 588L818.8 588L820.1 586.5L826.9 586.5L828.3 588L829.7 585.5L846 585.5M300 609L306.8 609L308.2 606L309.5 609L321.8 609L323.1 605.5L324.5 609L331.3 609L332.7 606L334 609L344.9 609L346.3 607.5L347.7 607.5L349 609L374.9 609L376.3 607.5L377.6 609L417.1 609L418.5 602.5L422.6 602.5L423.9 604.5L460.7 604.5L462 609L463.4 605L468.9 605L470.2 609L471.6 607.5L472.9 607.5L474.3 609L546.5 609L547.8 604.5L551.9 604.5L553.3 603L558.7 603L560.1 609L561.4 606L562.8 606L564.2 609L607.7 609M617 609L636.1 609M654 609L670.3 609M683 609L845 609M371 627L372.4 622L373.7 625L375.1 627L387.3 627M401 627L402.4 619L416 619L417.3 620.3L418.7 620.3L420.1 619L452.7 619L454.1 617.7L455.5 617.7L456.8 619L471.8 619L473.2 617.7L474.5 619L481.3 619L482.7 620.3L484.1 619L486.8 619L488.1 617.7L489.5 619L490.9 620.3L492.2 619L501.8 619L503.1 617.7L504.5 619L512.7 619L514 620.3L515.4 620.3L516.7 619L518.1 620.3L519.5 619M560 620L561.4 620L562.7 618.5L604.9 618.5M84 644L85.4 642.7L86.7 644L93.5 644L94.9 642.7L96.3 640.1L97.6 640.1L99 642.7L100.3 644L101.7 640.1L103.1 642.7L104.4 642.7L105.8 644L107.1 641.4L108.5 641.4L109.9 644L111.2 642.7L112.6 642.7L114 644L119.4 644L120.8 641.4L122.1 644L123.5 644L124.9 641.4L126.2 644L127.6 642.7L128.9 642.7L130.3 644L131.7 644L133 645.3L134.4 644L135.7 642.7L137.1 642.7L138.5 644L139.8 644L141.2 641.4L142.6 641.4L143.9 642.7L145.3 644L149.4 644L150.7 642.7L152.1 640.1L153.4 640.1L154.8 644L156.2 644L157.5 642.7L158.9 644L164.3 644L165.7 645.3L167.1 642.7L168.4 645.3L169.8 644L171.1 641.4L172.5 644L173.9 644L175.2 641.4L176.6 644L178 644L179.3 640.1L180.7 644L182 645.3L183.4 644L184.8 644L186.1 642.7L188.9 642.7L190.2 644L192.9 644L194.3 641L214.7 641L216.1 644L217.4 645.3L218.8 641.4L220.2 641.4L221.5 640.1L222.9 642.7L224.3 640.1L227 640.1L228.3 642.7L229.7 644L231.1 640.1L232.4 640.1L233.8 641.4L235.1 644L237.9 644L239.2 643L255.6 643L256.9 644L258.3 644L259.7 642.7L265.1 642.7L266.5 644L267.8 641.4L269.2 640.1L270.6 640.1L271.9 644L273.3 644L274.6 642.7L276 644L277.4 642.7L278.7 644L282.8 644L284.2 642.7L285.5 642.7M304 641L305.4 643.5L306.7 644.5L308.1 644.5L309.4 641L310.8 643.5L312.2 641L313.5 644.5L314.9 643.5L316.3 642L317.6 641L319 643.5L320.3 644.5L321.7 641L323.1 643.5L324.4 642L325.8 641L327.1 642L328.5 641L329.9 644.5L331.2 642L340.8 642L342.1 643L343.5 642L385.7 642L387.1 641L388.4 641L389.8 642L396.6 642L398 641L399.3 641L400.7 642L410.2 642L411.6 643L414.3 643L415.7 642L421.1 642L422.5 641L423.8 641L425.2 642L489.2 642L490.6 641L491.9 642L546.4 642L547.7 643L549.1 642L566.8 642L568.2 643L569.5 642L576.3 642L577.7 643L579.1 642L637.6 642L639 641L727.5 641L728.9 639L730.2 641L734.3 641L735.7 642L739.7 642L741.1 641L742.5 639L743.8 639L745.2 641L846 641M169 661L170.4 661L171.7 662.2L173.1 662.2L174.4 661L189.4 661L190.8 662.2L192.1 662.2L193.5 661L194.9 662.2L196.2 661L197.6 661L199 659.8L201.7 659.8L203 662.2L204.4 661L222.1 661L223.5 662.2L224.8 661L239.8 661L241.2 662.2L242.5 661L243.9 661M256 660L261.4 660L262.8 658.8L264.2 660L268.3 660L269.6 661.2L271 661.2L272.3 660L279.1 660L280.5 661.2L281.9 660L288.7 660L290 659.5L325.4 659.5M338 659.5L359.8 659.5L361.1 664L378.9 664M428 657L429.4 657L430.7 660L432.1 658L433.4 658L434.8 660L467.5 660" stroke="#7474f2" stroke-width="0.85" fill="none"/><path d="M139 323.5h1M140 323.5h1M141 323.5h1M143 325.5h1M144 323.5h1M145 323.5h1M147 323.5h1M148 323.5h1M149 323.5h1M151 323.5h1M152 323.5h1M154 323.5h1M155 323.5h1M156 323.5h1M158 323.5h1M159 323.5h1M160 323.5h1M162 323.5h1M163 323.5h1M164 323.5h1M166 323.5h1M167 323.5h1M169 323.5h1M170 323.5h1M171 323.5h1M173 323.5h1M174 323.5h1M175 323.5h1M177 323.5h1M178 323.5h1M179 323.5h1M181 323.5h1M182 323.5h1M183 323.5h1M185 323.5h1M186 323.5h1M188 320.5h1M189 321.5h1M190 323.5h1M192 328.5h1M193 328.5h1M194 323.5h1M196 323.5h1M197 319.5h1M198 319.5h1M200 321.5h1M201 320.5h1M203 320.5h1M204 323.5h1M205 323.5h1M207 323.5h1M208 326.5h1M209 323.5h1M211 323.5h1M212 328.5h1M213 328.5h1M215 321.5h1M216 318.5h1M218 318.5h1M219 318.5h1M220 326.5h1M222 321.5h1M223 320.5h1M224 323.5h1M226 320.5h1M227 320.5h1M228 324.5h1M230 324.5h1M231 324.5h1M233 320.5h1M234 323.5h1M235 323.5h1M237 319.5h1M238 319.5h1M239 319.5h1M241 324.5h1M242 323.5h1M243 323.5h1M245 323.5h1M246 318.5h1M247 318.5h1M249 318.5h1M250 318.5h1M252 323.5h1M253 323.5h1M254 321.5h1M256 321.5h1M257 321.5h1M258 323.5h1M260 324.5h1M261 324.5h1M262 323.5h1M264 321.5h1M265 324.5h1M267 323.5h1M268 323.5h1M269 320.5h1M271 323.5h1M272 323.5h1M273 323.5h1M275 320.5h1M276 320.5h1M277 323.5h1M279 323.5h1M280 323.5h1M282 321.5h1M283 321.5h1M284 321.5h1M286 323.5h1M287 323.5h1M288 323.5h1M290 326.5h1M291 323.5h1M292 321.5h1M294 321.5h1M295 323.5h1M297 323.5h1M298 323.5h1M299 323.5h1M301 324.5h1M302 323.5h1M303 323.5h1M305 323.5h1M306 324.5h1M307 323.5h1M309 323.5h1M310 323.5h1M311 323.5h1M313 323.5h1M314 323.5h1M316 320.5h1M317 323.5h1M318 324.5h1M320 326.5h1M321 326.5h1M322 327.5h1M324 323.5h1M325 321.5h1M326 323.5h1M328 323.5h1M329 321.5h1M331 320.5h1M332 323.5h1M333 321.5h1M335 321.5h1M336 320.5h1M337 323.5h1M339 320.5h1M340 323.5h1M341 320.5h1M343 320.5h1M344 323.5h1M346 326.5h1M347 326.5h1M348 321.5h1M363 326.5h1M364 326.5h1M365 321.5h1M367 321.5h1M368 321.5h1M369 323.5h1M371 323.5h1M372 320.5h1M373 320.5h1M375 320.5h1M376 323.5h1M378 324.5h1M379 324.5h1M380 323.5h1M382 323.5h1M383 323.5h1M384 323.5h1M386 323.5h1M387 320.5h1M388 320.5h1M390 320.5h1M391 321.5h1M393 321.5h1M394 323.5h1M395 321.5h1M397 321.5h1M398 323.5h1M399 323.5h1M401 323.5h1M402 323.5h1M403 318.5h1M405 323.5h1M406 323.5h1M407 320.5h1M409 320.5h1M410 323.5h1M412 323.5h1M413 323.5h1M414 321.5h1M416 323.5h1M417 323.5h1M418 323.5h1M420 323.5h1M421 323.5h1M422 323.5h1M424 323.5h1M425 323.5h1M427 323.5h1M428 321.5h1M429 323.5h1M431 323.5h1M432 323.5h1M433 323.5h1M435 323.5h1M436 323.5h1M437 323.5h1M439 323.5h1M440 323.5h1M442 323.5h1M443 323.5h1M444 323.5h1M446 323.5h1M447 323.5h1M448 323.5h1M450 323.5h1M451 323.5h1M452 323.5h1M454 323.5h1M465 326.5h1M466 323.5h1M467 323.5h1M469 321.5h1M470 323.5h1M471 323.5h1M473 324.5h1M474 323.5h1M475 324.5h1M477 318.5h1M478 321.5h1M480 321.5h1M481 324.5h1M482 324.5h1M484 323.5h1M485 323.5h1M486 323.5h1M488 321.5h1M489 323.5h1M490 324.5h1M492 324.5h1M493 324.5h1M495 324.5h1M496 324.5h1M497 324.5h1M499 324.5h1M500 324.5h1M501 324.5h1M503 324.5h1M504 324.5h1M505 324.5h1M507 324.5h1M508 324.5h1M509 324.5h1M511 324.5h1M512 324.5h1M514 324.5h1M515 320.5h1M516 320.5h1M518 321.5h1M519 323.5h1M520 321.5h1M522 321.5h1M523 321.5h1M524 321.5h1M526 323.5h1M527 321.5h1M529 321.5h1M530 321.5h1M531 321.5h1M533 323.5h1M534 323.5h1M535 321.5h1M537 324.5h1M538 323.5h1M539 323.5h1M541 323.5h1M542 324.5h1M544 323.5h1M545 320.5h1M546 320.5h1M548 323.5h1M549 323.5h1M550 323.5h1M552 323.5h1M553 318.5h1M554 318.5h1M556 318.5h1M557 318.5h1M559 318.5h1M560 318.5h1M561 318.5h1M563 321.5h1M564 323.5h1M565 323.5h1M567 321.5h1M568 323.5h1M569 323.5h1M571 321.5h1M572 323.5h1M573 321.5h1M575 323.5h1M576 323.5h1M578 323.5h1M579 323.5h1M580 323.5h1M582 323.5h1M583 323.5h1M584 321.5h1M586 323.5h1M587 321.5h1M588 321.5h1M590 320.5h1M591 320.5h1M593 323.5h1M594 323.5h1M595 323.5h1M597 324.5h1M598 323.5h1M599 321.5h1M601 321.5h1M602 321.5h1M603 321.5h1M605 323.5h1M606 323.5h1M608 324.5h1M609 320.5h1M610 324.5h1M612 324.5h1M613 323.5h1M614 324.5h1M616 318.5h1M617 318.5h1M618 323.5h1M620 321.5h1M621 323.5h1M623 323.5h1M624 318.5h1M625 323.5h1M627 323.5h1M628 323.5h1M629 323.5h1M631 321.5h1M632 323.5h1M633 323.5h1M635 323.5h1M636 323.5h1M637 321.5h1M639 321.5h1M640 320.5h1M642 320.5h1M643 326.5h1M644 323.5h1M646 320.5h1M660 325.5h1M661 325.5h1M662 325.5h1M664 323.5h1M665 323.5h1M666 323.5h1M668 323.5h1M669 323.5h1M670 323.5h1M672 322.5h1M673 322.5h1M675 322.5h1M676 322.5h1M677 322.5h1M679 320.5h1M680 320.5h1M681 320.5h1M683 320.5h1M684 320.5h1M685 320.5h1M694 323.5h1M695 323.5h1M696 323.5h1M698 323.5h1M699 324.5h1M700 318.5h1M702 324.5h1M703 324.5h1M704 324.5h1M706 324.5h1M707 324.5h1M709 321.5h1M710 323.5h1M711 324.5h1M713 323.5h1M714 324.5h1M715 323.5h1M717 320.5h1M718 320.5h1M719 326.5h1M721 323.5h1M722 324.5h1M724 323.5h1M725 321.5h1M726 321.5h1M728 321.5h1M729 321.5h1M730 323.5h1M732 321.5h1M733 321.5h1M734 321.5h1M736 320.5h1M737 320.5h1M738 323.5h1M740 323.5h1M741 321.5h1M743 323.5h1M744 324.5h1M745 321.5h1M747 318.5h1M748 324.5h1M749 323.5h1M751 318.5h1M752 323.5h1M753 323.5h1M755 320.5h1M756 320.5h1M758 323.5h1M759 324.5h1M760 320.5h1M762 323.5h1M763 326.5h1M764 323.5h1M766 323.5h1M767 323.5h1M768 324.5h1M770 321.5h1M771 321.5h1M773 321.5h1M774 321.5h1M775 323.5h1M777 324.5h1M778 324.5h1M779 323.5h1M781 323.5h1M782 323.5h1M783 323.5h1M785 325.5h1M786 325.5h1M788 325.5h1M171 345.5h1M172 345.5h1M173 345.5h1M175 345.5h1M176 345.5h1M177 345.5h1M179 347.5h1M180 345.5h1M181 347.5h1M183 347.5h1M184 347.5h1M186 347.5h1M187 347.5h1M188 347.5h1M190 344.5h1M191 347.5h1M192 347.5h1M194 347.5h1M195 344.5h1M196 342.5h1M198 342.5h1M199 342.5h1M201 347.5h1M202 347.5h1M203 347.5h1M205 347.5h1M206 347.5h1M207 347.5h1M209 347.5h1M210 347.5h1M211 345.5h1M213 345.5h1M214 345.5h1M215 347.5h1M217 347.5h1M218 347.5h1M220 347.5h1M221 347.5h1M222 347.5h1M224 347.5h1M225 347.5h1M226 347.5h1M228 347.5h1M229 347.5h1M230 347.5h1M232 347.5h1M233 347.5h1M235 347.5h1M236 347.5h1M237 347.5h1M239 347.5h1M240 347.5h1M241 347.5h1M243 347.5h1M244 347.5h1M245 342.5h1M247 345.5h1M248 344.5h1M250 347.5h1M251 347.5h1M252 345.5h1M254 343.5h1M255 341.5h1M321 347.5h1M322 347.5h1M323 347.5h1M325 345.5h1M326 345.5h1M327 347.5h1M329 347.5h1M330 347.5h1M331 347.5h1M333 347.5h1M334 347.5h1M336 345.5h1M337 347.5h1M120 367.5h1M121 365.5h1M122 365.5h1M124 365.5h1M125 365.5h1M126 365.5h1M128 365.5h1M129 365.5h1M130 365.5h1M132 365.5h1M133 365.5h1M135 365.5h1M136 365.5h1M137 365.5h1M139 365.5h1M140 365.5h1M141 365.5h1M143 365.5h1M144 365.5h1M145 365.5h1M147 365.5h1M148 365.5h1M150 365.5h1M151 365.5h1M152 365.5h1M176 365.5h1M177 365.5h1M178 365.5h1M180 365.5h1M181 365.5h1M182 365.5h1M184 365.5h1M185 365.5h1M186 365.5h1M188 365.5h1M189 365.5h1M191 365.5h1M192 365.5h1M193 365.5h1M195 365.5h1M196 365.5h1M197 365.5h1M199 365.5h1M200 365.5h1M201 365.5h1M203 365.5h1M204 365.5h1M206 365.5h1M207 364.5h1M208 363.5h1M210 362.5h1M211 362.5h1M212 362.5h1M214 362.5h1M215 362.5h1M216 362.5h1M218 362.5h1M219 362.5h1M220 362.5h1M222 362.5h1M223 362.5h1M225 362.5h1M226 362.5h1M227 362.5h1M229 362.5h1M230 362.5h1M231 362.5h1M233 362.5h1M234 362.5h1M235 362.5h1M237 362.5h1M238 362.5h1M240 362.5h1M241 362.5h1M242 362.5h1M244 362.5h1M245 362.5h1M246 362.5h1M248 362.5h1M249 362.5h1M250 362.5h1M252 362.5h1M253 362.5h1M255 362.5h1M256 362.5h1M257 362.5h1M259 362.5h1M260 362.5h1M261 362.5h1M263 362.5h1M264 362.5h1M265 362.5h1M267 362.5h1M268 362.5h1M270 362.5h1M271 362.5h1M272 362.5h1M274 362.5h1M275 362.5h1M276 362.5h1M278 362.5h1M279 362.5h1M280 362.5h1M282 362.5h1M283 362.5h1M284 362.5h1M286 362.5h1M287 362.5h1M289 363.5h1M290 363.5h1M291 362.5h1M293 362.5h1M294 362.5h1M295 362.5h1M297 362.5h1M298 362.5h1M299 362.5h1M301 362.5h1M302 362.5h1M304 362.5h1M305 362.5h1M306 362.5h1M308 362.5h1M309 362.5h1M310 362.5h1M312 362.5h1M313 362.5h1M314 362.5h1M316 362.5h1M317 362.5h1M319 362.5h1M320 362.5h1M321 362.5h1M323 362.5h1M324 362.5h1M325 362.5h1M327 362.5h1M328 362.5h1M329 362.5h1M331 362.5h1M332 362.5h1M334 362.5h1M335 362.5h1M336 362.5h1M338 362.5h1M339 362.5h1M340 363.5h1M342 362.5h1M343 362.5h1M344 362.5h1M346 362.5h1M347 362.5h1M348 362.5h1M350 362.5h1M351 362.5h1M353 362.5h1M354 362.5h1M355 362.5h1M357 362.5h1M358 362.5h1M359 362.5h1M361 362.5h1M362 362.5h1M363 362.5h1M365 362.5h1M366 362.5h1M368 362.5h1M369 362.5h1M370 362.5h1M372 362.5h1M373 362.5h1M374 362.5h1M376 362.5h1M377 362.5h1M378 362.5h1M380 362.5h1M381 362.5h1M383 362.5h1M384 362.5h1M385 362.5h1M387 362.5h1M388 362.5h1M389 362.5h1M391 362.5h1M392 362.5h1M393 362.5h1M395 362.5h1M396 362.5h1M398 362.5h1M399 360.5h1M400 360.5h1M402 358.5h1M403 358.5h1M404 358.5h1M406 358.5h1M407 362.5h1M408 360.5h1M410 360.5h1M411 362.5h1M412 367.5h1M414 367.5h1M415 367.5h1M417 367.5h1M418 367.5h1M419 367.5h1M421 362.5h1M422 362.5h1M423 362.5h1M425 362.5h1M426 362.5h1M427 362.5h1M429 362.5h1M430 362.5h1M432 362.5h1M433 362.5h1M434 362.5h1M436 362.5h1M437 362.5h1M438 362.5h1M440 362.5h1M441 362.5h1M442 362.5h1M444 362.5h1M445 362.5h1M447 362.5h1M448 362.5h1M449 362.5h1M451 362.5h1M452 362.5h1M453 362.5h1M455 362.5h1M456 362.5h1M457 362.5h1M459 362.5h1M460 362.5h1M462 362.5h1M463 362.5h1M464 362.5h1M466 362.5h1M467 362.5h1M468 362.5h1M470 362.5h1M471 362.5h1M472 362.5h1M474 362.5h1M475 362.5h1M476 362.5h1M478 362.5h1M479 362.5h1M481 362.5h1M482 362.5h1M483 362.5h1M485 362.5h1M486 362.5h1M487 362.5h1M489 362.5h1M490 362.5h1M491 362.5h1M493 362.5h1M494 362.5h1M496 362.5h1M510 363.5h1M511 363.5h1M512 363.5h1M514 363.5h1M515 363.5h1M516 363.5h1M533 363.5h1M534 363.5h1M535 363.5h1M537 363.5h1M538 363.5h1M539 363.5h1M541 363.5h1M542 363.5h1M543 363.5h1M545 363.5h1M546 363.5h1M548 362.5h1M549 363.5h1M550 362.5h1M552 363.5h1M553 363.5h1M554 363.5h1M556 363.5h1M557 363.5h1M558 363.5h1M560 363.5h1M561 363.5h1M563 363.5h1M564 363.5h1M565 363.5h1M567 363.5h1M568 363.5h1M569 363.5h1M571 363.5h1M572 363.5h1M573 363.5h1M575 363.5h1M576 363.5h1M577 363.5h1M579 363.5h1M580 363.5h1M582 363.5h1M583 363.5h1M584 363.5h1M586 363.5h1M587 363.5h1M588 363.5h1M590 363.5h1M591 363.5h1M592 363.5h1M594 363.5h1M595 363.5h1M597 363.5h1M598 363.5h1M599 363.5h1M601 363.5h1M602 363.5h1M603 363.5h1M605 363.5h1M606 362.5h1M607 362.5h1M609 363.5h1M610 363.5h1M612 363.5h1M613 363.5h1M614 363.5h1M616 363.5h1M617 363.5h1M618 363.5h1M620 363.5h1M621 363.5h1M622 363.5h1M624 363.5h1M625 363.5h1M627 363.5h1M628 363.5h1M629 363.5h1M631 363.5h1M632 363.5h1M633 363.5h1M635 363.5h1M636 363.5h1M637 363.5h1M639 363.5h1M640 363.5h1M641 363.5h1M643 363.5h1M644 363.5h1M646 363.5h1M647 363.5h1M648 363.5h1M650 363.5h1M651 363.5h1M652 363.5h1M654 363.5h1M655 363.5h1M656 363.5h1M658 363.5h1M659 363.5h1M661 363.5h1M662 363.5h1M663 363.5h1M681 361.5h1M682 363.5h1M683 363.5h1M685 363.5h1M686 363.5h1M687 363.5h1M689 363.5h1M690 363.5h1M691 363.5h1M693 363.5h1M694 363.5h1M696 363.5h1M697 363.5h1M698 363.5h1M700 363.5h1M701 363.5h1M702 363.5h1M704 363.5h1M705 363.5h1M706 363.5h1M708 363.5h1M709 363.5h1M711 363.5h1M712 363.5h1M713 363.5h1M715 363.5h1M716 363.5h1M717 363.5h1M719 363.5h1M720 363.5h1M721 363.5h1M723 363.5h1M724 363.5h1M725 363.5h1M727 363.5h1M728 363.5h1M740 363.5h1M741 363.5h1M742 363.5h1M744 363.5h1M745 363.5h1M746 363.5h1M748 363.5h1M749 363.5h1M750 363.5h1M752 363.5h1M753 363.5h1M755 363.5h1M756 363.5h1M757 363.5h1M759 363.5h1M760 363.5h1M761 363.5h1M786 363.5h1M787 363.5h1M788 363.5h1M790 363.5h1M791 363.5h1M792 363.5h1M794 363.5h1M795 363.5h1M796 363.5h1M798 363.5h1M799 363.5h1M801 363.5h1M802 363.5h1M803 363.5h1M805 363.5h1M806 363.5h1M807 363.5h1M809 361.5h1M810 361.5h1M811 361.5h1M813 361.5h1M814 361.5h1M816 361.5h1M817 361.5h1M818 361.5h1M820 361.5h1M821 361.5h1M822 361.5h1M824 361.5h1M825 361.5h1M826 361.5h1M828 361.5h1M829 361.5h1M830 361.5h1M832 361.5h1M833 361.5h1M835 363.5h1M836 363.5h1M837 363.5h1M839 363.5h1M840 363.5h1M841 363.5h1M843 363.5h1M844 363.5h1M845 363.5h1M351 385.5h1M352 381.5h1M353 384.5h1M355 383.5h1M356 381.5h1M357 382.5h1M359 381.5h1M360 381.5h1M361 381.5h1M363 381.5h1M364 381.5h1M366 381.5h1M367 381.5h1M368 381.5h1M370 381.5h1M371 379.5h1M372 381.5h1M374 381.5h1M375 379.5h1M376 381.5h1M378 382.5h1M379 379.5h1M381 381.5h1M382 381.5h1M383 382.5h1M385 381.5h1M386 381.5h1M387 381.5h1M389 381.5h1M390 381.5h1M391 379.5h1M393 378.5h1M394 379.5h1M395 381.5h1M397 381.5h1M398 382.5h1M400 382.5h1M401 381.5h1M402 381.5h1M404 378.5h1M405 381.5h1M406 379.5h1M408 379.5h1M409 379.5h1M410 381.5h1M412 381.5h1M413 381.5h1M415 381.5h1M416 381.5h1M417 381.5h1M419 381.5h1M420 381.5h1M421 379.5h1M423 379.5h1M424 381.5h1M425 381.5h1M427 381.5h1M428 382.5h1M430 381.5h1M431 381.5h1M432 382.5h1M434 382.5h1M435 381.5h1M436 381.5h1M438 381.5h1M439 381.5h1M440 381.5h1M442 381.5h1M443 382.5h1M445 381.5h1M446 381.5h1M447 381.5h1M449 381.5h1M450 381.5h1M451 381.5h1M453 381.5h1M454 381.5h1M455 379.5h1M457 379.5h1M458 381.5h1M459 381.5h1M461 381.5h1M462 378.5h1M464 378.5h1M465 381.5h1M466 381.5h1M468 381.5h1M469 381.5h1M470 381.5h1M472 381.5h1M473 381.5h1M474 378.5h1M476 381.5h1M477 382.5h1M479 381.5h1M480 381.5h1M481 381.5h1M483 381.5h1M484 382.5h1M485 381.5h1M487 381.5h1M488 381.5h1M489 381.5h1M491 381.5h1M492 378.5h1M494 378.5h1M495 383.5h1M496 383.5h1M498 378.5h1M499 381.5h1M500 382.5h1M502 381.5h1M503 381.5h1M504 381.5h1M506 382.5h1M507 378.5h1M509 381.5h1M510 381.5h1M511 381.5h1M513 381.5h1M514 381.5h1M515 381.5h1M517 381.5h1M518 381.5h1M519 381.5h1M521 381.5h1M522 383.5h1M523 381.5h1M525 381.5h1M526 381.5h1M528 381.5h1M529 381.5h1M530 381.5h1M532 378.5h1M533 378.5h1M534 381.5h1M536 381.5h1M537 381.5h1M538 381.5h1M540 382.5h1M541 381.5h1M543 378.5h1M544 381.5h1M545 381.5h1M547 381.5h1M548 381.5h1M549 382.5h1M551 381.5h1M552 381.5h1M553 381.5h1M555 381.5h1M556 381.5h1M558 379.5h1M559 379.5h1M560 381.5h1M562 381.5h1M563 383.5h1M564 381.5h1M566 381.5h1M567 381.5h1M568 383.5h1M570 381.5h1M571 382.5h1M573 381.5h1M574 381.5h1M575 378.5h1M577 378.5h1M578 378.5h1M579 378.5h1M581 378.5h1M582 381.5h1M583 381.5h1M585 381.5h1M586 382.5h1M587 382.5h1M589 381.5h1M590 381.5h1M592 381.5h1M593 381.5h1M594 381.5h1M596 381.5h1M597 381.5h1M598 381.5h1M600 381.5h1M601 381.5h1M602 381.5h1M604 381.5h1M605 381.5h1M607 381.5h1M608 381.5h1M609 381.5h1M611 381.5h1M612 381.5h1M613 381.5h1M615 381.5h1M616 381.5h1M617 381.5h1M619 381.5h1M620 381.5h1M622 381.5h1M623 381.5h1M624 381.5h1M626 383.5h1M627 383.5h1M628 379.5h1M630 379.5h1M631 379.5h1M632 382.5h1M634 382.5h1M635 382.5h1M637 381.5h1M638 379.5h1M639 381.5h1M641 381.5h1M642 382.5h1M643 382.5h1M645 383.5h1M646 383.5h1M647 379.5h1M649 379.5h1M650 381.5h1M651 382.5h1M653 382.5h1M654 379.5h1M656 381.5h1M657 379.5h1M658 381.5h1M660 381.5h1M661 381.5h1M662 378.5h1M664 381.5h1M665 381.5h1M666 381.5h1M668 381.5h1M669 381.5h1M671 381.5h1M672 382.5h1M673 381.5h1M675 381.5h1M676 383.5h1M677 383.5h1M679 383.5h1M680 383.5h1M681 383.5h1M683 383.5h1M684 381.5h1M686 382.5h1M687 382.5h1M688 381.5h1M690 381.5h1M691 380.5h1M692 379.5h1M694 379.5h1M723 376.5h1M761 376.5h1M239 399.5h1M240 403.5h1M241 402.5h1M243 403.5h1M244 403.5h1M245 403.5h1M247 403.5h1M248 403.5h1M264 399.5h1M265 403.5h1M266 403.5h1M268 403.5h1M269 400.5h1M270 403.5h1M272 401.5h1M273 401.5h1M274 403.5h1M276 403.5h1M277 403.5h1M279 401.5h1M280 403.5h1M281 403.5h1M283 400.5h1M284 403.5h1M285 403.5h1M287 403.5h1M288 401.5h1M289 403.5h1M291 403.5h1M292 401.5h1M294 401.5h1M295 403.5h1M296 403.5h1M298 403.5h1M299 403.5h1M300 403.5h1M302 403.5h1M303 403.5h1M304 403.5h1M306 403.5h1M307 403.5h1M308 403.5h1M310 401.5h1M311 401.5h1M313 403.5h1M314 401.5h1M315 400.5h1M317 400.5h1M318 400.5h1M319 400.5h1M321 400.5h1M322 403.5h1M323 403.5h1M325 403.5h1M326 403.5h1M328 403.5h1M329 400.5h1M330 401.5h1M332 401.5h1M333 403.5h1M334 403.5h1M336 403.5h1M337 403.5h1M338 403.5h1M340 401.5h1M341 403.5h1M343 403.5h1M344 401.5h1M345 403.5h1M347 403.5h1M348 403.5h1M349 403.5h1M351 403.5h1M352 403.5h1M353 403.5h1M355 403.5h1M356 403.5h1M358 403.5h1M359 403.5h1M360 403.5h1M362 403.5h1M363 403.5h1M364 401.5h1M366 403.5h1M367 403.5h1M368 401.5h1M370 401.5h1M371 403.5h1M372 403.5h1M374 403.5h1M375 403.5h1M377 403.5h1M378 400.5h1M379 403.5h1M381 403.5h1M382 403.5h1M383 403.5h1M385 401.5h1M386 403.5h1M387 403.5h1M389 401.5h1M390 403.5h1M392 403.5h1M393 403.5h1M394 403.5h1M396 403.5h1M397 401.5h1M398 403.5h1M400 403.5h1M401 403.5h1M402 403.5h1M404 401.5h1M405 403.5h1M407 401.5h1M408 403.5h1M409 401.5h1M411 401.5h1M412 401.5h1M413 403.5h1M415 400.5h1M416 400.5h1M417 400.5h1M419 403.5h1M420 399.5h1M422 399.5h1M423 399.5h1M444 401.5h1M445 401.5h1M446 403.5h1M448 403.5h1M449 401.5h1M450 401.5h1M452 403.5h1M453 403.5h1M454 403.5h1M456 403.5h1M457 403.5h1M459 403.5h1M460 403.5h1M461 403.5h1M463 403.5h1M464 403.5h1M465 401.5h1M467 401.5h1M468 403.5h1M469 401.5h1M471 403.5h1M472 403.5h1M474 403.5h1M475 403.5h1M476 403.5h1M478 401.5h1M479 401.5h1M480 401.5h1M482 401.5h1M483 403.5h1M484 403.5h1M486 403.5h1M487 403.5h1M488 403.5h1M490 403.5h1M491 403.5h1M493 403.5h1M494 401.5h1M495 401.5h1M497 403.5h1M498 403.5h1M499 403.5h1M501 403.5h1M502 403.5h1M503 403.5h1M505 403.5h1M506 403.5h1M508 401.5h1M509 403.5h1M510 401.5h1M512 403.5h1M513 401.5h1M514 401.5h1M516 401.5h1M517 401.5h1M518 403.5h1M520 403.5h1M521 400.5h1M523 403.5h1M524 403.5h1M525 403.5h1M527 403.5h1M528 403.5h1M529 403.5h1M531 403.5h1M532 401.5h1M533 401.5h1M535 403.5h1M536 403.5h1M538 403.5h1M539 403.5h1M540 403.5h1M542 403.5h1M543 403.5h1M544 400.5h1M546 403.5h1M547 400.5h1M548 403.5h1M550 403.5h1M551 403.5h1M552 400.5h1M554 403.5h1M555 403.5h1M557 403.5h1M558 403.5h1M559 403.5h1M561 403.5h1M562 403.5h1M563 403.5h1M565 401.5h1M566 403.5h1M567 400.5h1M569 403.5h1M570 403.5h1M572 403.5h1M573 401.5h1M574 403.5h1M576 403.5h1M577 403.5h1M578 403.5h1M580 403.5h1M581 403.5h1M582 403.5h1M584 403.5h1M585 403.5h1M587 401.5h1M588 401.5h1M589 401.5h1M591 401.5h1M592 401.5h1M593 403.5h1M595 403.5h1M596 403.5h1M597 400.5h1M599 403.5h1M600 403.5h1M602 403.5h1M603 403.5h1M604 401.5h1M606 401.5h1M607 403.5h1M608 403.5h1M610 401.5h1M611 401.5h1M612 401.5h1M614 403.5h1M615 403.5h1M616 403.5h1M618 403.5h1M619 403.5h1M621 403.5h1M622 403.5h1M634 403.5h1M635 403.5h1M636 403.5h1M638 403.5h1M639 403.5h1M640 403.5h1M642 403.5h1M643 403.5h1M644 403.5h1M646 403.5h1M647 403.5h1M649 403.5h1M650 403.5h1M651 403.5h1M653 403.5h1M654 403.5h1M655 403.5h1M657 403.5h1M658 403.5h1M659 403.5h1M661 403.5h1M662 403.5h1M664 403.5h1M665 403.5h1M666 403.5h1M668 403.5h1M669 403.5h1M670 403.5h1M672 403.5h1M673 403.5h1M674 403.5h1M676 401.5h1M677 403.5h1M678 402.5h1M680 403.5h1M681 403.5h1M683 403.5h1M684 403.5h1M685 403.5h1M687 403.5h1M688 403.5h1M689 403.5h1M691 403.5h1M692 403.5h1M693 403.5h1M695 403.5h1M696 403.5h1M698 403.5h1M699 400.5h1M700 400.5h1M702 403.5h1M703 403.5h1M704 403.5h1M706 403.5h1M707 403.5h1M708 403.5h1M710 403.5h1M711 402.5h1M713 403.5h1M714 403.5h1M715 403.5h1M717 403.5h1M718 403.5h1M719 403.5h1M721 403.5h1M722 403.5h1M723 403.5h1M725 403.5h1M726 403.5h1M728 403.5h1M729 403.5h1M730 403.5h1M732 403.5h1M733 403.5h1M734 403.5h1M736 403.5h1M737 403.5h1M738 403.5h1M740 403.5h1M741 403.5h1M742 403.5h1M744 403.5h1M745 403.5h1M747 403.5h1M748 403.5h1M749 403.5h1M751 403.5h1M752 403.5h1M753 403.5h1M755 403.5h1M756 403.5h1M757 403.5h1M759 403.5h1M760 403.5h1M762 403.5h1M763 403.5h1M764 403.5h1M766 403.5h1M767 403.5h1M768 402.5h1M770 403.5h1M771 403.5h1M772 403.5h1M774 403.5h1M775 403.5h1M777 403.5h1M778 403.5h1M779 403.5h1M781 403.5h1M782 403.5h1M783 403.5h1M785 403.5h1M786 403.5h1M787 403.5h1M789 403.5h1M790 403.5h1M792 403.5h1M793 403.5h1M794 403.5h1M796 403.5h1M797 403.5h1M798 403.5h1M800 403.5h1M801 403.5h1M802 403.5h1M804 403.5h1M805 403.5h1M806 403.5h1M808 403.5h1M809 403.5h1M811 403.5h1M812 403.5h1M813 403.5h1M815 402.5h1M816 402.5h1M817 403.5h1M819 403.5h1M820 403.5h1M821 403.5h1M823 403.5h1M824 403.5h1M826 403.5h1M827 403.5h1M828 403.5h1M830 403.5h1M831 403.5h1M832 403.5h1M834 403.5h1M835 403.5h1M836 403.5h1M838 403.5h1M839 403.5h1M841 403.5h1M842 402.5h1M843 403.5h1M845 400.5h1M154 412.5h1M155 415.5h1M156 415.5h1M158 419.5h1M159 418.5h1M160 418.5h1M162 418.5h1M163 418.5h1M164 418.5h1M166 418.5h1M167 416.5h1M169 418.5h1M170 418.5h1M171 418.5h1M173 418.5h1M174 418.5h1M175 415.5h1M177 415.5h1M178 415.5h1M179 415.5h1M181 415.5h1M182 418.5h1M184 418.5h1M185 418.5h1M186 416.5h1M188 416.5h1M189 418.5h1M190 416.5h1M192 418.5h1M193 418.5h1M194 416.5h1M196 416.5h1M197 416.5h1M198 415.5h1M200 416.5h1M201 418.5h1M203 418.5h1M204 418.5h1M205 416.5h1M207 418.5h1M208 418.5h1M209 418.5h1M211 419.5h1M212 418.5h1M213 419.5h1M215 413.5h1M216 413.5h1M218 419.5h1M219 419.5h1M220 415.5h1M222 416.5h1M223 418.5h1M224 418.5h1M226 419.5h1M227 418.5h1M228 415.5h1M230 415.5h1M231 419.5h1M233 419.5h1M234 416.5h1M235 416.5h1M237 418.5h1M238 416.5h1M239 418.5h1M241 420.5h1M242 418.5h1M243 416.5h1M245 416.5h1M246 416.5h1M248 418.5h1M249 418.5h1M250 418.5h1M252 418.5h1M253 418.5h1M254 416.5h1M256 416.5h1M257 420.5h1M258 420.5h1M260 418.5h1M261 416.5h1M262 416.5h1M264 416.5h1M265 416.5h1M267 418.5h1M268 418.5h1M269 418.5h1M271 418.5h1M272 418.5h1M273 418.5h1M275 418.5h1M276 418.5h1M277 418.5h1M279 418.5h1M280 418.5h1M282 418.5h1M283 418.5h1M284 416.5h1M286 416.5h1M287 418.5h1M288 418.5h1M290 419.5h1M291 419.5h1M292 418.5h1M294 419.5h1M295 415.5h1M297 415.5h1M298 415.5h1M299 418.5h1M301 415.5h1M302 418.5h1M303 418.5h1M305 418.5h1M306 418.5h1M307 416.5h1M309 416.5h1M310 416.5h1M312 416.5h1M313 415.5h1M314 416.5h1M316 416.5h1M317 418.5h1M318 416.5h1M320 416.5h1M321 416.5h1M322 418.5h1M324 418.5h1M325 416.5h1M326 418.5h1M328 418.5h1M329 418.5h1M331 418.5h1M332 418.5h1M333 418.5h1M335 418.5h1M336 418.5h1M337 419.5h1M339 418.5h1M340 418.5h1M341 413.5h1M343 418.5h1M344 416.5h1M346 416.5h1M347 415.5h1M348 413.5h1M350 418.5h1M351 418.5h1M352 420.5h1M354 418.5h1M355 418.5h1M356 418.5h1M358 416.5h1M359 416.5h1M361 418.5h1M362 416.5h1M363 418.5h1M365 415.5h1M366 415.5h1M367 418.5h1M369 416.5h1M370 419.5h1M371 416.5h1M373 418.5h1M374 419.5h1M376 419.5h1M377 418.5h1M378 419.5h1M380 418.5h1M381 418.5h1M382 418.5h1M384 415.5h1M385 419.5h1M386 418.5h1M388 416.5h1M389 419.5h1M390 419.5h1M392 419.5h1M393 419.5h1M395 418.5h1M396 418.5h1M397 418.5h1M399 415.5h1M400 419.5h1M401 419.5h1M403 419.5h1M404 418.5h1M405 418.5h1M407 418.5h1M408 418.5h1M410 413.5h1M411 416.5h1M412 418.5h1M414 418.5h1M415 418.5h1M416 418.5h1M418 418.5h1M419 416.5h1M420 419.5h1M422 419.5h1M423 418.5h1M425 415.5h1M426 415.5h1M427 415.5h1M429 418.5h1M430 418.5h1M431 420.5h1M433 418.5h1M434 416.5h1M435 418.5h1M437 418.5h1M438 418.5h1M440 419.5h1M441 413.5h1M442 418.5h1M444 416.5h1M445 418.5h1M446 419.5h1M448 418.5h1M449 415.5h1M450 415.5h1M452 418.5h1M453 418.5h1M454 418.5h1M456 416.5h1M457 416.5h1M459 416.5h1M460 416.5h1M461 419.5h1M463 419.5h1M464 419.5h1M465 418.5h1M467 418.5h1M468 413.5h1M469 416.5h1M471 418.5h1M472 419.5h1M474 416.5h1M475 418.5h1M476 418.5h1M478 419.5h1M479 418.5h1M480 418.5h1M482 415.5h1M483 415.5h1M484 418.5h1M486 415.5h1M487 415.5h1M489 415.5h1M490 418.5h1M491 418.5h1M493 418.5h1M494 418.5h1M495 418.5h1M497 418.5h1M498 418.5h1M499 419.5h1M501 418.5h1M502 418.5h1M504 418.5h1M505 418.5h1M506 416.5h1M508 418.5h1M509 419.5h1M510 418.5h1M512 418.5h1M513 419.5h1M514 419.5h1M516 419.5h1M517 418.5h1M518 418.5h1M520 419.5h1M521 418.5h1M523 418.5h1M524 418.5h1M525 418.5h1M587 418.5h1M588 413.5h1M589 413.5h1M591 418.5h1M592 416.5h1M593 418.5h1M595 415.5h1M596 415.5h1M597 418.5h1M599 418.5h1M600 418.5h1M602 419.5h1M603 419.5h1M604 418.5h1M606 419.5h1M607 418.5h1M608 418.5h1M610 413.5h1M611 413.5h1M612 419.5h1M614 419.5h1M615 418.5h1M617 416.5h1M618 418.5h1M619 418.5h1M621 418.5h1M622 418.5h1M623 418.5h1M625 418.5h1M626 420.5h1M627 420.5h1M629 418.5h1M630 418.5h1M631 418.5h1M633 416.5h1M634 416.5h1M636 418.5h1M637 418.5h1M638 418.5h1M640 418.5h1M641 416.5h1M642 418.5h1M644 418.5h1M645 418.5h1M646 418.5h1M648 418.5h1M649 418.5h1M651 418.5h1M652 418.5h1M653 413.5h1M655 413.5h1M656 418.5h1M657 416.5h1M659 416.5h1M660 416.5h1M661 419.5h1M663 419.5h1M664 419.5h1M666 419.5h1M667 418.5h1M668 418.5h1M670 418.5h1M671 416.5h1M672 416.5h1M674 418.5h1M675 418.5h1M676 419.5h1M678 419.5h1M679 419.5h1M681 419.5h1M682 418.5h1M683 419.5h1M685 419.5h1M686 418.5h1M687 418.5h1M689 418.5h1M690 418.5h1M691 416.5h1M693 415.5h1M694 418.5h1M695 418.5h1M697 415.5h1M698 419.5h1M700 416.5h1M701 419.5h1M702 418.5h1M704 418.5h1M705 419.5h1M706 418.5h1M708 418.5h1M709 418.5h1M710 418.5h1M712 418.5h1M713 416.5h1M715 416.5h1M716 416.5h1M717 418.5h1M719 418.5h1M720 418.5h1M751 418.5h1M771 418.5h1M772 413.5h1M773 419.5h1M775 419.5h1M776 415.5h1M777 416.5h1M779 418.5h1M780 418.5h1M781 413.5h1M783 416.5h1M784 418.5h1M786 416.5h1M787 415.5h1M788 418.5h1M790 418.5h1M791 418.5h1M792 415.5h1M794 418.5h1M795 416.5h1M796 416.5h1M798 415.5h1M799 416.5h1M801 416.5h1M802 415.5h1M803 418.5h1M805 418.5h1M806 418.5h1M807 418.5h1M809 412.5h1M810 418.5h1M811 416.5h1M813 416.5h1M814 418.5h1M815 415.5h1M817 418.5h1M818 413.5h1M820 413.5h1M821 413.5h1M822 420.5h1M824 418.5h1M825 418.5h1M826 418.5h1M828 415.5h1M829 415.5h1M830 418.5h1M832 418.5h1M833 418.5h1M835 418.5h1M836 412.5h1M837 412.5h1M839 412.5h1M840 418.5h1M841 419.5h1M843 416.5h1M844 418.5h1M371 440.5h1M372 440.5h1M373 438.5h1M375 438.5h1M376 438.5h1M377 440.5h1M379 440.5h1M380 440.5h1M381 440.5h1M383 436.5h1M384 436.5h1M386 436.5h1M387 436.5h1M388 437.5h1M390 438.5h1M391 440.5h1M392 440.5h1M394 440.5h1M395 437.5h1M396 437.5h1M398 438.5h1M399 440.5h1M401 437.5h1M402 437.5h1M403 440.5h1M405 440.5h1M406 440.5h1M407 440.5h1M409 440.5h1M410 437.5h1M411 437.5h1M413 437.5h1M414 437.5h1M415 437.5h1M417 437.5h1M418 440.5h1M420 440.5h1M421 440.5h1M422 440.5h1M424 440.5h1M425 440.5h1M426 440.5h1M428 440.5h1M429 440.5h1M430 440.5h1M432 440.5h1M433 440.5h1M435 440.5h1M436 437.5h1M437 440.5h1M439 440.5h1M440 436.5h1M441 436.5h1M443 436.5h1M444 436.5h1M445 436.5h1M447 440.5h1M448 440.5h1M450 440.5h1M451 440.5h1M452 440.5h1M454 440.5h1M455 440.5h1M456 440.5h1M458 440.5h1M459 437.5h1M460 437.5h1M462 440.5h1M463 440.5h1M465 440.5h1M466 440.5h1M467 440.5h1M469 440.5h1M470 440.5h1M471 438.5h1M473 440.5h1M474 440.5h1M475 440.5h1M477 437.5h1M478 437.5h1M479 438.5h1M481 440.5h1M482 440.5h1M484 440.5h1M485 440.5h1M486 435.5h1M488 438.5h1M489 440.5h1M490 440.5h1M492 440.5h1M493 437.5h1M494 437.5h1M496 437.5h1M497 440.5h1M499 440.5h1M500 438.5h1M501 440.5h1M503 440.5h1M504 440.5h1M505 440.5h1M507 440.5h1M508 440.5h1M509 440.5h1M511 437.5h1M512 438.5h1M514 440.5h1M515 437.5h1M516 440.5h1M518 440.5h1M519 435.5h1M520 440.5h1M522 440.5h1M523 440.5h1M524 440.5h1M526 437.5h1M527 440.5h1M529 440.5h1M530 437.5h1M531 440.5h1M533 440.5h1M534 438.5h1M535 437.5h1M537 438.5h1M538 437.5h1M539 437.5h1M541 437.5h1M542 440.5h1M543 440.5h1M545 440.5h1M546 440.5h1M548 440.5h1M549 440.5h1M550 437.5h1M552 437.5h1M553 437.5h1M554 440.5h1M556 438.5h1M557 438.5h1M558 440.5h1M560 435.5h1M561 440.5h1M563 440.5h1M564 440.5h1M565 440.5h1M567 440.5h1M568 440.5h1M569 440.5h1M571 440.5h1M572 437.5h1M573 440.5h1M575 437.5h1M576 437.5h1M578 440.5h1M579 440.5h1M580 440.5h1M582 440.5h1M583 440.5h1M584 440.5h1M586 440.5h1M587 440.5h1M588 440.5h1M590 440.5h1M591 440.5h1M593 440.5h1M594 440.5h1M595 440.5h1M597 440.5h1M598 440.5h1M599 437.5h1M601 437.5h1M602 440.5h1M603 437.5h1M605 437.5h1M606 440.5h1M607 440.5h1M609 440.5h1M610 440.5h1M612 440.5h1M613 438.5h1M635 433.5h1M636 433.5h1M637 435.5h1M639 435.5h1M640 441.5h1M641 437.5h1M643 437.5h1M644 437.5h1M645 437.5h1M647 437.5h1M648 437.5h1M650 437.5h1M651 437.5h1M652 437.5h1M654 437.5h1M655 437.5h1M656 437.5h1M658 437.5h1M659 437.5h1M660 441.5h1M662 436.5h1M663 436.5h1M665 441.5h1M666 437.5h1M667 437.5h1M669 437.5h1M670 437.5h1M671 437.5h1M673 437.5h1M674 437.5h1M675 437.5h1M677 437.5h1M678 437.5h1M679 437.5h1M681 438.5h1M682 438.5h1M684 438.5h1M685 438.5h1M686 438.5h1M688 438.5h1M689 438.5h1M690 438.5h1M692 438.5h1M693 438.5h1M694 438.5h1M696 438.5h1M697 438.5h1M699 438.5h1M700 438.5h1M701 438.5h1M703 438.5h1M704 441.5h1M705 441.5h1M707 441.5h1M708 441.5h1M709 441.5h1M711 441.5h1M712 441.5h1M714 441.5h1M715 441.5h1M716 441.5h1M718 441.5h1M719 441.5h1M720 441.5h1M722 441.5h1M723 441.5h1M724 441.5h1M726 441.5h1M727 441.5h1M729 441.5h1M730 441.5h1M731 441.5h1M733 441.5h1M734 441.5h1M735 441.5h1M737 441.5h1M738 441.5h1M739 441.5h1M741 441.5h1M742 441.5h1M743 441.5h1M745 441.5h1M746 441.5h1M748 441.5h1M749 441.5h1M750 441.5h1M763 439.5h1M764 439.5h1M765 439.5h1M767 441.5h1M768 441.5h1M769 441.5h1M771 441.5h1M772 441.5h1M773 441.5h1M775 441.5h1M776 441.5h1M778 441.5h1M779 441.5h1M780 441.5h1M782 441.5h1M783 441.5h1M784 441.5h1M786 441.5h1M787 441.5h1M788 441.5h1M790 441.5h1M791 441.5h1M793 441.5h1M794 441.5h1M795 441.5h1M797 441.5h1M798 441.5h1M799 441.5h1M801 441.5h1M802 441.5h1M803 441.5h1M805 441.5h1M806 441.5h1M807 441.5h1M809 441.5h1M810 441.5h1M812 441.5h1M813 441.5h1M814 441.5h1M816 441.5h1M817 441.5h1M818 441.5h1M841 441.5h1M842 441.5h1M843 441.5h1M845 441.5h1M302 456.5h1M303 457.5h1M304 458.5h1M306 458.5h1M307 458.5h1M308 459.5h1M310 459.5h1M311 459.5h1M312 459.5h1M314 457.5h1M315 458.5h1M317 458.5h1M318 458.5h1M319 457.5h1M321 457.5h1M322 457.5h1M323 457.5h1M325 457.5h1M326 456.5h1M327 456.5h1M329 457.5h1M330 457.5h1M332 457.5h1M333 456.5h1M334 456.5h1M336 456.5h1M337 456.5h1M338 456.5h1M340 457.5h1M341 457.5h1M342 457.5h1M344 457.5h1M345 456.5h1M346 456.5h1M348 456.5h1M349 457.5h1M351 457.5h1M352 457.5h1M353 457.5h1M355 457.5h1M356 457.5h1M357 457.5h1M359 453.5h1M360 453.5h1M361 454.5h1M363 454.5h1M364 456.5h1M366 456.5h1M367 457.5h1M368 457.5h1M370 456.5h1M371 457.5h1M372 453.5h1M374 454.5h1M375 454.5h1M376 454.5h1M378 457.5h1M379 457.5h1M381 457.5h1M382 457.5h1M383 456.5h1M385 457.5h1M386 457.5h1M387 457.5h1M389 457.5h1M390 457.5h1M391 457.5h1M393 456.5h1M394 457.5h1M396 456.5h1M397 457.5h1M398 457.5h1M400 457.5h1M401 457.5h1M402 456.5h1M404 456.5h1M405 456.5h1M406 457.5h1M408 457.5h1M409 457.5h1M410 457.5h1M412 453.5h1M413 456.5h1M415 458.5h1M416 458.5h1M417 458.5h1M419 457.5h1M420 457.5h1M421 457.5h1M423 456.5h1M424 457.5h1M425 457.5h1M427 457.5h1M428 457.5h1M430 457.5h1M431 457.5h1M432 457.5h1M434 454.5h1M435 457.5h1M436 457.5h1M438 454.5h1M439 457.5h1M440 456.5h1M442 456.5h1M443 456.5h1M445 454.5h1M446 454.5h1M447 454.5h1M449 457.5h1M450 457.5h1M451 457.5h1M453 457.5h1M454 457.5h1M455 457.5h1M457 457.5h1M458 456.5h1M460 457.5h1M461 457.5h1M462 457.5h1M464 456.5h1M465 457.5h1M466 457.5h1M468 457.5h1M469 456.5h1M470 457.5h1M472 457.5h1M473 457.5h1M474 457.5h1M476 457.5h1M477 457.5h1M479 457.5h1M480 456.5h1M481 457.5h1M483 457.5h1M484 457.5h1M485 457.5h1M487 457.5h1M488 457.5h1M489 457.5h1M491 457.5h1M492 457.5h1M494 457.5h1M495 457.5h1M496 457.5h1M498 457.5h1M499 457.5h1M500 457.5h1M502 457.5h1M503 457.5h1M504 457.5h1M506 456.5h1M507 456.5h1M509 454.5h1M510 454.5h1M511 456.5h1M513 457.5h1M514 457.5h1M515 457.5h1M517 457.5h1M518 457.5h1M519 457.5h1M521 457.5h1M522 457.5h1M524 457.5h1M525 457.5h1M526 457.5h1M528 457.5h1M529 457.5h1M530 457.5h1M532 457.5h1M533 457.5h1M534 457.5h1M536 457.5h1M537 457.5h1M538 457.5h1M565 457.5h1M566 457.5h1M567 457.5h1M569 457.5h1M570 457.5h1M571 457.5h1M583 457.5h1M594 457.5h1M651 455.5h1M62 466.5h1M63 466.5h1M64 466.5h1M66 466.5h1M67 466.5h1M68 468.5h1M70 468.5h1M71 468.5h1M72 468.5h1M74 466.5h1M75 466.5h1M77 466.5h1M78 466.5h1M79 466.5h1M81 466.5h1M82 466.5h1M83 466.5h1M85 466.5h1M86 466.5h1M87 466.5h1M89 466.5h1M90 471.5h1M92 471.5h1M93 466.5h1M94 466.5h1M96 466.5h1M97 468.5h1M98 468.5h1M100 466.5h1M101 466.5h1M102 467.5h1M104 469.5h1M105 466.5h1M106 466.5h1M108 466.5h1M109 466.5h1M111 466.5h1M112 466.5h1M113 466.5h1M115 466.5h1M116 466.5h1M117 466.5h1M119 466.5h1M120 466.5h1M121 466.5h1M123 466.5h1M124 466.5h1M126 466.5h1M127 466.5h1M128 466.5h1M130 466.5h1M131 466.5h1M132 466.5h1M134 466.5h1M135 466.5h1M136 466.5h1M138 466.5h1M139 466.5h1M141 466.5h1M142 466.5h1M143 466.5h1M145 466.5h1M146 466.5h1M147 466.5h1M149 466.5h1M150 466.5h1M151 466.5h1M153 466.5h1M154 466.5h1M156 466.5h1M157 466.5h1M158 466.5h1M160 466.5h1M161 466.5h1M162 466.5h1M164 466.5h1M165 466.5h1M166 466.5h1M168 466.5h1M169 466.5h1M170 466.5h1M172 466.5h1M173 466.5h1M175 466.5h1M176 466.5h1M177 466.5h1M179 466.5h1M180 466.5h1M181 466.5h1M183 466.5h1M184 466.5h1M185 466.5h1M187 466.5h1M188 466.5h1M190 466.5h1M191 466.5h1M192 466.5h1M194 466.5h1M195 466.5h1M196 466.5h1M198 466.5h1M199 466.5h1M200 466.5h1M202 466.5h1M203 466.5h1M205 466.5h1M206 466.5h1M207 466.5h1M209 466.5h1M210 466.5h1M211 466.5h1M213 466.5h1M214 466.5h1M215 466.5h1M217 467.5h1M218 466.5h1M220 466.5h1M221 466.5h1M222 466.5h1M224 466.5h1M225 471.5h1M226 478.5h1M228 466.5h1M229 471.5h1M230 466.5h1M232 466.5h1M233 466.5h1M234 466.5h1M236 466.5h1M237 466.5h1M239 466.5h1M240 466.5h1M241 466.5h1M243 466.5h1M244 466.5h1M245 466.5h1M247 466.5h1M248 466.5h1M249 466.5h1M251 466.5h1M252 466.5h1M254 466.5h1M255 466.5h1M256 466.5h1M258 466.5h1M259 466.5h1M260 466.5h1M262 466.5h1M263 466.5h1M264 466.5h1M266 466.5h1M267 466.5h1M269 467.5h1M270 466.5h1M271 466.5h1M273 466.5h1M274 466.5h1M275 466.5h1M277 466.5h1M278 466.5h1M279 466.5h1M281 466.5h1M282 466.5h1M284 466.5h1M285 466.5h1M286 466.5h1M288 466.5h1M289 466.5h1M290 466.5h1M292 466.5h1M293 466.5h1M294 466.5h1M296 466.5h1M297 466.5h1M298 468.5h1M299 468.5h1M300 474.5h1M302 474.5h1M303 472.5h1M304 472.5h1M306 474.5h1M307 474.5h1M308 474.5h1M310 474.5h1M311 474.5h1M313 474.5h1M314 474.5h1M315 472.5h1M317 472.5h1M318 472.5h1M319 474.5h1M321 474.5h1M322 474.5h1M323 474.5h1M325 474.5h1M326 474.5h1M328 474.5h1M329 474.5h1M330 474.5h1M332 474.5h1M333 474.5h1M334 474.5h1M336 474.5h1M337 474.5h1M338 474.5h1M340 474.5h1M341 474.5h1M342 474.5h1M344 474.5h1M345 474.5h1M347 474.5h1M348 474.5h1M349 474.5h1M351 478.5h1M352 478.5h1M353 478.5h1M355 478.5h1M356 478.5h1M357 478.5h1M359 474.5h1M360 474.5h1M362 475.5h1M363 477.5h1M364 477.5h1M366 477.5h1M367 477.5h1M368 477.5h1M370 474.5h1M371 474.5h1M372 478.5h1M374 478.5h1M375 478.5h1M377 478.5h1M378 478.5h1M379 478.5h1M381 475.5h1M382 475.5h1M383 474.5h1M385 474.5h1M386 474.5h1M387 471.5h1M389 475.5h1M390 474.5h1M392 472.5h1M393 478.5h1M394 478.5h1M396 478.5h1M397 478.5h1M426 470.5h1M427 470.5h1M428 470.5h1M430 470.5h1M431 470.5h1M432 470.5h1M434 470.5h1M435 470.5h1M436 470.5h1M438 470.5h1M439 470.5h1M441 470.5h1M442 470.5h1M443 470.5h1M445 470.5h1M446 470.5h1M447 470.5h1M449 470.5h1M450 470.5h1M451 470.5h1M453 470.5h1M454 470.5h1M456 470.5h1M457 470.5h1M458 470.5h1M460 468.5h1M461 468.5h1M462 470.5h1M464 470.5h1M465 470.5h1M466 470.5h1M468 468.5h1M469 470.5h1M470 470.5h1M472 470.5h1M473 468.5h1M475 470.5h1M476 470.5h1M477 470.5h1M479 470.5h1M480 470.5h1M481 470.5h1M483 470.5h1M484 470.5h1M485 470.5h1M487 468.5h1M488 470.5h1M490 470.5h1M491 470.5h1M492 470.5h1M494 470.5h1M495 471.5h1M496 470.5h1M498 470.5h1M499 470.5h1M500 470.5h1M502 470.5h1M503 470.5h1M505 470.5h1M506 468.5h1M507 470.5h1M509 470.5h1M510 468.5h1M511 471.5h1M513 470.5h1M514 470.5h1M515 470.5h1M517 470.5h1M518 470.5h1M520 470.5h1M521 470.5h1M522 470.5h1M524 470.5h1M525 470.5h1M526 468.5h1M528 470.5h1M529 470.5h1M530 470.5h1M532 470.5h1M533 470.5h1M534 470.5h1M536 467.5h1M537 470.5h1M539 470.5h1M540 470.5h1M541 470.5h1M543 470.5h1M544 468.5h1M545 470.5h1M547 470.5h1M548 470.5h1M549 470.5h1M551 470.5h1M552 468.5h1M554 470.5h1M555 470.5h1M556 470.5h1M558 470.5h1M559 470.5h1M560 470.5h1M561 470.5h1M562 470.5h1M564 470.5h1M565 470.5h1M566 470.5h1M568 470.5h1M569 470.5h1M570 470.5h1M572 470.5h1M573 470.5h1M575 470.5h1M576 470.5h1M577 470.5h1M579 470.5h1M580 470.5h1M581 470.5h1M583 474.5h1M584 473.5h1M585 470.5h1M587 470.5h1M588 470.5h1M590 470.5h1M591 468.5h1M592 468.5h1M594 468.5h1M595 468.5h1M596 468.5h1M598 468.5h1M599 468.5h1M600 470.5h1M602 470.5h1M603 470.5h1M604 473.5h1M606 473.5h1M607 471.5h1M609 470.5h1M610 473.5h1M611 473.5h1M613 470.5h1M614 470.5h1M615 470.5h1M617 474.5h1M618 470.5h1M619 476.5h1M621 470.5h1M622 470.5h1M624 470.5h1M625 470.5h1M626 470.5h1M628 470.5h1M629 474.5h1M630 470.5h1M632 474.5h1M633 474.5h1M634 468.5h1M636 468.5h1M637 470.5h1M639 476.5h1M640 467.5h1M641 467.5h1M643 467.5h1M644 467.5h1M645 467.5h1M647 467.5h1M648 467.5h1M649 467.5h1M651 467.5h1M652 467.5h1M654 467.5h1M655 470.5h1M656 469.5h1M658 469.5h1M659 469.5h1M660 473.5h1M662 470.5h1M663 471.5h1M664 470.5h1M666 470.5h1M667 474.5h1M668 474.5h1M669 474.5h1M671 474.5h1M672 474.5h1M673 474.5h1M675 474.5h1M676 474.5h1M677 474.5h1M679 474.5h1M680 474.5h1M682 474.5h1M683 474.5h1M684 474.5h1M686 474.5h1M687 474.5h1M688 474.5h1M690 474.5h1M691 474.5h1M692 474.5h1M694 474.5h1M695 474.5h1M697 474.5h1M698 474.5h1M699 474.5h1M701 474.5h1M702 474.5h1M703 474.5h1M705 474.5h1M706 474.5h1M707 474.5h1M709 473.5h1M710 469.5h1M711 468.5h1M713 468.5h1M714 468.5h1M716 468.5h1M717 468.5h1M718 468.5h1M720 466.5h1M721 468.5h1M722 468.5h1M724 468.5h1M725 468.5h1M726 468.5h1M728 468.5h1M729 468.5h1M731 468.5h1M732 468.5h1M733 468.5h1M735 468.5h1M736 474.5h1M737 474.5h1M739 472.5h1M740 469.5h1M741 469.5h1M743 469.5h1M744 468.5h1M746 471.5h1M747 468.5h1M748 471.5h1M750 469.5h1M751 468.5h1M752 471.5h1M754 474.5h1M755 468.5h1M756 472.5h1M758 469.5h1M759 472.5h1M761 468.5h1M762 466.5h1M763 468.5h1M765 478.5h1M766 478.5h1M767 468.5h1M769 468.5h1M770 468.5h1M771 468.5h1M773 468.5h1M774 468.5h1M775 468.5h1M777 468.5h1M778 468.5h1M780 468.5h1M781 468.5h1M782 468.5h1M784 469.5h1M785 468.5h1M786 468.5h1M788 468.5h1M789 468.5h1M790 468.5h1M792 466.5h1M793 468.5h1M795 468.5h1M796 468.5h1M797 468.5h1M799 468.5h1M800 471.5h1M801 469.5h1M803 469.5h1M804 469.5h1M805 468.5h1M807 469.5h1M808 468.5h1M810 468.5h1M811 468.5h1M812 469.5h1M814 478.5h1M815 478.5h1M816 471.5h1M818 471.5h1M819 469.5h1M820 471.5h1M822 469.5h1M823 468.5h1M825 468.5h1M826 469.5h1M827 469.5h1M829 468.5h1M830 468.5h1M831 468.5h1M833 470.5h1M834 470.5h1M835 470.5h1M837 470.5h1M838 470.5h1M839 470.5h1M841 473.5h1M842 473.5h1M844 469.5h1M845 478.5h1M163 493.5h1M164 493.5h1M165 493.5h1M167 493.5h1M168 493.5h1M169 493.5h1M171 493.5h1M172 493.5h1M173 493.5h1M175 491.5h1M176 493.5h1M178 493.5h1M179 493.5h1M180 493.5h1M182 493.5h1M183 493.5h1M112 514.5h1M113 514.5h1M114 514.5h1M116 514.5h1M117 514.5h1M118 514.5h1M120 514.5h1M121 514.5h1M122 514.5h1M124 514.5h1M125 514.5h1M127 514.5h1M128 514.5h1M129 514.5h1M131 514.5h1M132 514.5h1M133 514.5h1M135 514.5h1M136 514.5h1M137 514.5h1M139 514.5h1M140 514.5h1M142 514.5h1M262 534.5h1M263 534.5h1M264 534.5h1M266 534.5h1M267 534.5h1M268 534.5h1M270 534.5h1M271 534.5h1M272 534.5h1M274 534.5h1M275 534.5h1M277 534.5h1M278 534.5h1M279 534.5h1M281 534.5h1M282 534.5h1M283 534.5h1M285 534.5h1M286 534.5h1M287 534.5h1M289 534.5h1M290 534.5h1M292 534.5h1M293 534.5h1M294 534.5h1M296 534.5h1M297 534.5h1M298 534.5h1M300 534.5h1M301 534.5h1M302 534.5h1M304 534.5h1M305 534.5h1M306 534.5h1M308 534.5h1M309 534.5h1M311 534.5h1M312 534.5h1M313 534.5h1M330 534.5h1M331 534.5h1M332 534.5h1M334 534.5h1M335 534.5h1M336 534.5h1M338 534.5h1M339 534.5h1M340 534.5h1M342 534.5h1M343 534.5h1M345 534.5h1M346 534.5h1M347 534.5h1M349 534.5h1M350 534.5h1M351 529.5h1M353 534.5h1M354 534.5h1M355 534.5h1M357 532.5h1M358 534.5h1M360 534.5h1M361 534.5h1M362 534.5h1M364 534.5h1M365 534.5h1M366 534.5h1M368 534.5h1M369 534.5h1M370 534.5h1M372 534.5h1M373 534.5h1M374 534.5h1M376 534.5h1M377 534.5h1M379 534.5h1M380 534.5h1M381 534.5h1M383 534.5h1M384 534.5h1M385 534.5h1M387 534.5h1M398 534.5h1M399 534.5h1M400 534.5h1M402 534.5h1M403 534.5h1M404 534.5h1M406 534.5h1M407 534.5h1M408 534.5h1M410 534.5h1M411 534.5h1M413 534.5h1M414 534.5h1M415 534.5h1M417 534.5h1M418 534.5h1M419 534.5h1M421 534.5h1M422 534.5h1M423 534.5h1M425 528.5h1M426 521.5h1M428 521.5h1M429 526.5h1M430 531.5h1M432 534.5h1M433 534.5h1M434 534.5h1M436 534.5h1M437 534.5h1M438 534.5h1M62 544.5h1M63 544.5h1M64 544.5h1M66 544.5h1M67 544.5h1M68 544.5h1M70 542.5h1M71 545.5h1M72 544.5h1M74 546.5h1M75 546.5h1M77 546.5h1M78 546.5h1M79 546.5h1M81 544.5h1M82 542.5h1M83 544.5h1M85 542.5h1M86 544.5h1M87 541.5h1M89 541.5h1M90 541.5h1M92 544.5h1M93 544.5h1M94 544.5h1M96 542.5h1M97 544.5h1M98 544.5h1M100 544.5h1M101 542.5h1M102 544.5h1M104 544.5h1M105 544.5h1M106 545.5h1M108 544.5h1M109 542.5h1M111 542.5h1M112 544.5h1M113 545.5h1M115 544.5h1M116 544.5h1M117 544.5h1M119 544.5h1M63 565.5h1M64 565.5h1M65 565.5h1M67 565.5h1M68 565.5h1M69 565.5h1M71 563.5h1M72 563.5h1M73 565.5h1M75 565.5h1M76 565.5h1M78 565.5h1M79 565.5h1M80 565.5h1M82 566.5h1M83 566.5h1M84 566.5h1M86 566.5h1M87 566.5h1M88 566.5h1M90 566.5h1M91 566.5h1M93 566.5h1M94 566.5h1M95 566.5h1M97 566.5h1M98 566.5h1M99 566.5h1M101 565.5h1M102 565.5h1M103 565.5h1M105 565.5h1M106 565.5h1M107 563.5h1M109 565.5h1M110 565.5h1M112 565.5h1M113 563.5h1M114 563.5h1M116 565.5h1M117 563.5h1M118 565.5h1M120 565.5h1M132 564.5h1M133 565.5h1M134 565.5h1M136 565.5h1M154 565.5h1M155 565.5h1M156 565.5h1M158 565.5h1M159 565.5h1M160 565.5h1M162 565.5h1M163 565.5h1M164 565.5h1M176 562.5h1M177 565.5h1M178 564.5h1M180 565.5h1M181 565.5h1M182 565.5h1M184 565.5h1M185 565.5h1M186 565.5h1M188 565.5h1M189 565.5h1M191 565.5h1M192 565.5h1M193 565.5h1M195 565.5h1M196 563.5h1M197 565.5h1M199 565.5h1M200 565.5h1M201 565.5h1M203 565.5h1M204 565.5h1M206 565.5h1M207 565.5h1M208 565.5h1M210 565.5h1M211 565.5h1M212 565.5h1M214 565.5h1M232 567.5h1M244 560.5h1M245 564.5h1M255 565.5h1M376 566.5h1M377 566.5h1M378 566.5h1M380 566.5h1M381 566.5h1M382 566.5h1M384 566.5h1M385 566.5h1M386 566.5h1M388 566.5h1M389 566.5h1M391 566.5h1M392 566.5h1M393 566.5h1M395 566.5h1M396 566.5h1M397 566.5h1M399 566.5h1M400 566.5h1M401 566.5h1M403 566.5h1M404 564.5h1M406 564.5h1M407 564.5h1M408 566.5h1M410 566.5h1M411 566.5h1M412 566.5h1M414 566.5h1M415 566.5h1M416 566.5h1M418 566.5h1M419 566.5h1M420 566.5h1M422 566.5h1M423 566.5h1M425 566.5h1M426 566.5h1M427 566.5h1M429 566.5h1M430 566.5h1M431 566.5h1M433 565.5h1M434 565.5h1M435 565.5h1M437 566.5h1M438 566.5h1M440 566.5h1M441 566.5h1M442 566.5h1M444 564.5h1M445 564.5h1M446 564.5h1M448 566.5h1M449 566.5h1M450 566.5h1M452 566.5h1M453 566.5h1M455 566.5h1M456 566.5h1M457 566.5h1M459 561.5h1M460 566.5h1M461 566.5h1M463 566.5h1M464 566.5h1M465 566.5h1M467 566.5h1M468 566.5h1M470 566.5h1M471 566.5h1M472 566.5h1M474 566.5h1M475 566.5h1M476 566.5h1M492 564.5h1M493 564.5h1M494 564.5h1M496 566.5h1M497 566.5h1M498 566.5h1M500 566.5h1M501 566.5h1M502 566.5h1M504 566.5h1M505 566.5h1M507 566.5h1M508 566.5h1M509 566.5h1M511 566.5h1M512 566.5h1M513 566.5h1M515 566.5h1M516 566.5h1M517 566.5h1M544 566.5h1M557 566.5h1M558 566.5h1M559 566.5h1M561 566.5h1M562 566.5h1M563 566.5h1M565 566.5h1M566 566.5h1M567 566.5h1M569 566.5h1M570 566.5h1M572 566.5h1M573 566.5h1M574 566.5h1M576 566.5h1M577 566.5h1M578 566.5h1M591 559.5h1M600 566.5h1M462 588.5h1M463 588.5h1M464 588.5h1M466 588.5h1M467 588.5h1M468 588.5h1M470 587.5h1M471 587.5h1M472 588.5h1M474 585.5h1M475 585.5h1M477 588.5h1M478 587.5h1M479 588.5h1M481 588.5h1M482 587.5h1M483 585.5h1M485 587.5h1M486 588.5h1M487 585.5h1M489 587.5h1M490 588.5h1M492 588.5h1M493 588.5h1M494 588.5h1M496 588.5h1M497 588.5h1M498 588.5h1M500 588.5h1M501 588.5h1M502 588.5h1M504 588.5h1M505 588.5h1M506 588.5h1M508 588.5h1M509 588.5h1M511 588.5h1M512 588.5h1M513 588.5h1M515 588.5h1M516 588.5h1M517 588.5h1M519 588.5h1M520 588.5h1M521 588.5h1M523 588.5h1M524 588.5h1M526 588.5h1M527 588.5h1M528 588.5h1M530 588.5h1M531 588.5h1M532 588.5h1M534 588.5h1M535 588.5h1M536 588.5h1M538 588.5h1M539 588.5h1M541 588.5h1M542 588.5h1M543 588.5h1M545 588.5h1M546 588.5h1M547 588.5h1M549 588.5h1M550 588.5h1M551 588.5h1M553 588.5h1M554 588.5h1M556 588.5h1M557 588.5h1M558 588.5h1M560 588.5h1M561 588.5h1M562 588.5h1M564 588.5h1M565 588.5h1M566 588.5h1M568 588.5h1M569 588.5h1M570 586.5h1M572 586.5h1M573 588.5h1M575 588.5h1M576 588.5h1M577 588.5h1M579 588.5h1M580 588.5h1M581 588.5h1M583 588.5h1M584 588.5h1M585 586.5h1M587 586.5h1M588 588.5h1M590 588.5h1M591 588.5h1M592 588.5h1M594 588.5h1M595 588.5h1M596 588.5h1M598 588.5h1M599 588.5h1M600 588.5h1M602 588.5h1M603 588.5h1M605 588.5h1M606 588.5h1M607 588.5h1M609 588.5h1M610 588.5h1M611 588.5h1M613 588.5h1M614 588.5h1M615 588.5h1M617 588.5h1M618 588.5h1M620 588.5h1M621 588.5h1M622 588.5h1M624 588.5h1M625 588.5h1M626 588.5h1M628 588.5h1M629 588.5h1M630 588.5h1M632 588.5h1M633 588.5h1M634 588.5h1M636 588.5h1M637 588.5h1M639 588.5h1M640 588.5h1M641 588.5h1M643 588.5h1M644 588.5h1M645 588.5h1M647 588.5h1M648 588.5h1M649 588.5h1M651 588.5h1M652 586.5h1M654 583.5h1M655 588.5h1M656 588.5h1M658 588.5h1M659 588.5h1M660 588.5h1M662 588.5h1M663 588.5h1M664 588.5h1M666 588.5h1M667 588.5h1M669 588.5h1M670 588.5h1M671 588.5h1M673 588.5h1M674 588.5h1M675 588.5h1M677 588.5h1M678 588.5h1M679 588.5h1M681 588.5h1M682 588.5h1M684 588.5h1M685 588.5h1M686 588.5h1M688 588.5h1M689 588.5h1M690 588.5h1M692 588.5h1M693 588.5h1M694 588.5h1M696 588.5h1M697 588.5h1M698 588.5h1M700 588.5h1M701 588.5h1M703 588.5h1M704 588.5h1M705 588.5h1M707 588.5h1M708 588.5h1M709 588.5h1M711 586.5h1M712 586.5h1M713 588.5h1M715 588.5h1M716 588.5h1M718 588.5h1M719 588.5h1M720 588.5h1M722 585.5h1M723 588.5h1M724 585.5h1M726 588.5h1M727 586.5h1M728 588.5h1M730 585.5h1M731 588.5h1M733 588.5h1M734 588.5h1M735 588.5h1M737 588.5h1M738 588.5h1M739 588.5h1M741 588.5h1M742 588.5h1M743 588.5h1M745 588.5h1M746 588.5h1M748 588.5h1M749 588.5h1M750 588.5h1M752 588.5h1M753 588.5h1M754 588.5h1M756 588.5h1M757 588.5h1M758 588.5h1M760 588.5h1M761 588.5h1M762 588.5h1M764 588.5h1M765 588.5h1M767 588.5h1M768 588.5h1M769 588.5h1M771 588.5h1M772 588.5h1M773 588.5h1M775 588.5h1M776 588.5h1M777 588.5h1M779 588.5h1M780 588.5h1M782 588.5h1M783 588.5h1M784 588.5h1M786 588.5h1M787 588.5h1M788 588.5h1M790 588.5h1M791 588.5h1M792 588.5h1M794 588.5h1M795 586.5h1M797 588.5h1M798 588.5h1M799 588.5h1M801 588.5h1M802 588.5h1M803 588.5h1M805 588.5h1M806 588.5h1M807 588.5h1M809 588.5h1M810 588.5h1M812 588.5h1M813 588.5h1M814 588.5h1M816 588.5h1M817 588.5h1M818 588.5h1M820 586.5h1M821 586.5h1M822 586.5h1M824 586.5h1M825 586.5h1M826 586.5h1M828 588.5h1M829 585.5h1M831 585.5h1M832 585.5h1M833 585.5h1M835 585.5h1M836 585.5h1M837 585.5h1M839 585.5h1M840 585.5h1M841 585.5h1M843 585.5h1M844 585.5h1M846 585.5h1M300 609.5h1M301 609.5h1M302 609.5h1M304 609.5h1M305 609.5h1M306 609.5h1M308 606.5h1M309 609.5h1M310 609.5h1M312 609.5h1M313 609.5h1M315 609.5h1M316 609.5h1M317 609.5h1M319 609.5h1M320 609.5h1M321 609.5h1M323 605.5h1M324 609.5h1M325 609.5h1M327 609.5h1M328 609.5h1M330 609.5h1M331 609.5h1M332 606.5h1M334 609.5h1M335 609.5h1M336 609.5h1M338 609.5h1M339 609.5h1M340 609.5h1M342 609.5h1M343 609.5h1M344 609.5h1M346 607.5h1M347 607.5h1M349 609.5h1M350 609.5h1M351 609.5h1M353 609.5h1M354 609.5h1M355 609.5h1M357 609.5h1M358 609.5h1M359 609.5h1M361 609.5h1M362 609.5h1M364 609.5h1M365 609.5h1M366 609.5h1M368 609.5h1M369 609.5h1M370 609.5h1M372 609.5h1M373 609.5h1M374 609.5h1M376 607.5h1M377 609.5h1M379 609.5h1M380 609.5h1M381 609.5h1M383 609.5h1M384 609.5h1M385 609.5h1M387 609.5h1M388 609.5h1M389 609.5h1M391 609.5h1M392 609.5h1M394 609.5h1M395 609.5h1M396 609.5h1M398 609.5h1M399 609.5h1M400 609.5h1M402 609.5h1M403 609.5h1M404 609.5h1M406 609.5h1M407 609.5h1M408 609.5h1M410 609.5h1M411 609.5h1M413 609.5h1M414 609.5h1M415 609.5h1M417 609.5h1M418 602.5h1M419 602.5h1M421 602.5h1M422 602.5h1M423 604.5h1M425 604.5h1M426 604.5h1M428 604.5h1M429 604.5h1M430 604.5h1M432 604.5h1M433 604.5h1M434 604.5h1M436 604.5h1M437 604.5h1M438 604.5h1M440 604.5h1M441 604.5h1M443 604.5h1M444 604.5h1M445 604.5h1M447 604.5h1M448 604.5h1M449 604.5h1M451 604.5h1M452 604.5h1M453 604.5h1M455 604.5h1M456 604.5h1M458 604.5h1M459 604.5h1M460 604.5h1M462 609.5h1M463 605.5h1M464 605.5h1M466 605.5h1M467 605.5h1M468 605.5h1M470 609.5h1M471 607.5h1M472 607.5h1M474 609.5h1M475 609.5h1M477 609.5h1M478 609.5h1M479 609.5h1M481 609.5h1M482 609.5h1M483 609.5h1M485 609.5h1M486 609.5h1M487 609.5h1M489 609.5h1M490 609.5h1M492 609.5h1M493 609.5h1M494 609.5h1M496 609.5h1M497 609.5h1M498 609.5h1M500 609.5h1M501 609.5h1M502 609.5h1M504 609.5h1M505 609.5h1M507 609.5h1M508 609.5h1M509 609.5h1M511 609.5h1M512 609.5h1M513 609.5h1M515 609.5h1M516 609.5h1M517 609.5h1M519 609.5h1M520 609.5h1M522 609.5h1M523 609.5h1M524 609.5h1M526 609.5h1M527 609.5h1M528 609.5h1M530 609.5h1M531 609.5h1M532 609.5h1M534 609.5h1M535 609.5h1M536 609.5h1M538 609.5h1M539 609.5h1M541 609.5h1M542 609.5h1M543 609.5h1M545 609.5h1M546 609.5h1M547 604.5h1M549 604.5h1M550 604.5h1M551 604.5h1M553 603.5h1M554 603.5h1M556 603.5h1M557 603.5h1M558 603.5h1M560 609.5h1M561 606.5h1M562 606.5h1M564 609.5h1M565 609.5h1M566 609.5h1M568 609.5h1M569 609.5h1M571 609.5h1M572 609.5h1M573 609.5h1M575 609.5h1M576 609.5h1M577 609.5h1M579 609.5h1M580 609.5h1M581 609.5h1M583 609.5h1M584 609.5h1M586 609.5h1M587 609.5h1M588 609.5h1M590 609.5h1M591 609.5h1M592 609.5h1M594 609.5h1M595 609.5h1M596 609.5h1M598 609.5h1M599 609.5h1M600 609.5h1M602 609.5h1M603 609.5h1M605 609.5h1M606 609.5h1M607 609.5h1M617 609.5h1M618 609.5h1M619 609.5h1M621 609.5h1M622 609.5h1M623 609.5h1M625 609.5h1M626 609.5h1M627 609.5h1M629 609.5h1M630 609.5h1M632 609.5h1M633 609.5h1M634 609.5h1M636 609.5h1M654 609.5h1M655 609.5h1M656 609.5h1M658 609.5h1M659 609.5h1M660 609.5h1M662 609.5h1M663 609.5h1M664 609.5h1M666 609.5h1M667 609.5h1M669 609.5h1M670 609.5h1M683 609.5h1M684 609.5h1M685 609.5h1M687 609.5h1M688 609.5h1M689 609.5h1M691 609.5h1M692 609.5h1M693 609.5h1M695 609.5h1M696 609.5h1M698 609.5h1M699 609.5h1M700 609.5h1M702 609.5h1M703 609.5h1M704 609.5h1M706 609.5h1M707 609.5h1M708 609.5h1M710 609.5h1M711 609.5h1M713 609.5h1M714 609.5h1M715 609.5h1M717 609.5h1M718 609.5h1M719 609.5h1M721 609.5h1M722 609.5h1M723 609.5h1M725 609.5h1M726 609.5h1M727 609.5h1M729 609.5h1M730 609.5h1M732 609.5h1M733 609.5h1M734 609.5h1M736 609.5h1M737 609.5h1M738 609.5h1M740 609.5h1M741 609.5h1M742 609.5h1M744 609.5h1M745 609.5h1M747 609.5h1M748 609.5h1M749 609.5h1M751 609.5h1M752 609.5h1M753 609.5h1M755 609.5h1M756 609.5h1M757 609.5h1M759 609.5h1M760 609.5h1M762 609.5h1M763 609.5h1M764 609.5h1M766 609.5h1M767 609.5h1M768 609.5h1M770 609.5h1M771 609.5h1M772 609.5h1M774 609.5h1M775 609.5h1M777 609.5h1M778 609.5h1M779 609.5h1M781 609.5h1M782 609.5h1M783 609.5h1M785 609.5h1M786 609.5h1M787 609.5h1M789 609.5h1M790 609.5h1M791 609.5h1M793 609.5h1M794 609.5h1M796 609.5h1M797 609.5h1M798 609.5h1M800 609.5h1M801 609.5h1M802 609.5h1M804 609.5h1M805 609.5h1M806 609.5h1M808 609.5h1M809 609.5h1M811 609.5h1M812 609.5h1M813 609.5h1M815 609.5h1M816 609.5h1M817 609.5h1M819 609.5h1M820 609.5h1M821 609.5h1M823 609.5h1M824 609.5h1M826 609.5h1M827 609.5h1M828 609.5h1M830 609.5h1M831 609.5h1M832 609.5h1M834 609.5h1M835 609.5h1M836 609.5h1M838 609.5h1M839 609.5h1M841 609.5h1M842 609.5h1M843 609.5h1M845 609.5h1M371 627.5h1M372 622.5h1M373 625.5h1M375 627.5h1M376 627.5h1M377 627.5h1M379 627.5h1M380 627.5h1M381 627.5h1M383 627.5h1M384 627.5h1M386 627.5h1M387 627.5h1M401 627.5h1M402 619.5h1M403 619.5h1M405 619.5h1M406 619.5h1M407 619.5h1M409 619.5h1M410 619.5h1M411 619.5h1M413 619.5h1M414 619.5h1M416 619.5h1M417 620.5h1M418 620.5h1M420 619.5h1M421 619.5h1M422 619.5h1M424 619.5h1M425 619.5h1M426 619.5h1M428 619.5h1M429 619.5h1M431 619.5h1M432 619.5h1M433 619.5h1M435 619.5h1M436 619.5h1M437 619.5h1M439 619.5h1M440 619.5h1M441 619.5h1M443 619.5h1M444 619.5h1M445 619.5h1M447 619.5h1M448 619.5h1M450 619.5h1M451 619.5h1M452 619.5h1M454 617.5h1M455 617.5h1M456 619.5h1M458 619.5h1M459 619.5h1M460 619.5h1M462 619.5h1M463 619.5h1M465 619.5h1M466 619.5h1M467 619.5h1M469 619.5h1M470 619.5h1M471 619.5h1M473 617.5h1M474 619.5h1M475 619.5h1M477 619.5h1M478 619.5h1M480 619.5h1M481 619.5h1M482 620.5h1M484 619.5h1M485 619.5h1M486 619.5h1M488 617.5h1M489 619.5h1M490 620.5h1M492 619.5h1M493 619.5h1M495 619.5h1M496 619.5h1M497 619.5h1M499 619.5h1M500 619.5h1M501 619.5h1M503 617.5h1M504 619.5h1M505 619.5h1M507 619.5h1M508 619.5h1M509 619.5h1M511 619.5h1M512 619.5h1M514 620.5h1M515 620.5h1M516 619.5h1M518 620.5h1M519 619.5h1M560 620.5h1M561 620.5h1M562 618.5h1M564 618.5h1M565 618.5h1M566 618.5h1M568 618.5h1M569 618.5h1M570 618.5h1M572 618.5h1M573 618.5h1M575 618.5h1M576 618.5h1M577 618.5h1M579 618.5h1M580 618.5h1M581 618.5h1M583 618.5h1M584 618.5h1M585 618.5h1M587 618.5h1M588 618.5h1M590 618.5h1M591 618.5h1M592 618.5h1M594 618.5h1M595 618.5h1M596 618.5h1M598 618.5h1M599 618.5h1M600 618.5h1M602 618.5h1M603 618.5h1M604 618.5h1M84 644.5h1M85 642.5h1M86 644.5h1M88 644.5h1M89 644.5h1M90 644.5h1M92 644.5h1M93 644.5h1M94 642.5h1M96 640.5h1M97 640.5h1M99 642.5h1M100 644.5h1M101 640.5h1M103 642.5h1M104 642.5h1M105 644.5h1M107 641.5h1M108 641.5h1M109 644.5h1M111 642.5h1M112 642.5h1M114 644.5h1M115 644.5h1M116 644.5h1M118 644.5h1M119 644.5h1M120 641.5h1M122 644.5h1M123 644.5h1M124 641.5h1M126 644.5h1M127 642.5h1M128 642.5h1M130 644.5h1M131 644.5h1M133 645.5h1M134 644.5h1M135 642.5h1M137 642.5h1M138 644.5h1M139 644.5h1M141 641.5h1M142 641.5h1M143 642.5h1M145 644.5h1M146 644.5h1M148 644.5h1M149 644.5h1M150 642.5h1M152 640.5h1M153 640.5h1M154 644.5h1M156 644.5h1M157 642.5h1M158 644.5h1M160 644.5h1M161 644.5h1M163 644.5h1M164 644.5h1M165 645.5h1M167 642.5h1M168 645.5h1M169 644.5h1M171 641.5h1M172 644.5h1M173 644.5h1M175 641.5h1M176 644.5h1M178 644.5h1M179 640.5h1M180 644.5h1M182 645.5h1M183 644.5h1M184 644.5h1M186 642.5h1M187 642.5h1M188 642.5h1M190 644.5h1M191 644.5h1M192 644.5h1M194 641.5h1M195 641.5h1M197 641.5h1M198 641.5h1M199 641.5h1M201 641.5h1M202 641.5h1M203 641.5h1M205 641.5h1M206 641.5h1M207 641.5h1M209 641.5h1M210 641.5h1M212 641.5h1M213 641.5h1M214 641.5h1M216 644.5h1M217 645.5h1M218 641.5h1M220 641.5h1M221 640.5h1M222 642.5h1M224 640.5h1M225 640.5h1M227 640.5h1M228 642.5h1M229 644.5h1M231 640.5h1M232 640.5h1M233 641.5h1M235 644.5h1M236 644.5h1M237 644.5h1M239 643.5h1M240 643.5h1M242 643.5h1M243 643.5h1M244 643.5h1M246 643.5h1M247 643.5h1M248 643.5h1M250 643.5h1M251 643.5h1M252 643.5h1M254 643.5h1M255 643.5h1M256 644.5h1M258 644.5h1M259 642.5h1M261 642.5h1M262 642.5h1M263 642.5h1M265 642.5h1M266 644.5h1M267 641.5h1M269 640.5h1M270 640.5h1M271 644.5h1M273 644.5h1M274 642.5h1M276 644.5h1M277 642.5h1M278 644.5h1M280 644.5h1M281 644.5h1M282 644.5h1M284 642.5h1M285 642.5h1M304 641.5h1M305 643.5h1M306 644.5h1M308 644.5h1M309 641.5h1M310 643.5h1M312 641.5h1M313 644.5h1M314 643.5h1M316 642.5h1M317 641.5h1M319 643.5h1M320 644.5h1M321 641.5h1M323 643.5h1M324 642.5h1M325 641.5h1M327 642.5h1M328 641.5h1M329 644.5h1M331 642.5h1M332 642.5h1M334 642.5h1M335 642.5h1M336 642.5h1M338 642.5h1M339 642.5h1M340 642.5h1M342 643.5h1M343 642.5h1M344 642.5h1M346 642.5h1M347 642.5h1M348 642.5h1M350 642.5h1M351 642.5h1M353 642.5h1M354 642.5h1M355 642.5h1M357 642.5h1M358 642.5h1M359 642.5h1M361 642.5h1M362 642.5h1M363 642.5h1M365 642.5h1M366 642.5h1M368 642.5h1M369 642.5h1M370 642.5h1M372 642.5h1M373 642.5h1M374 642.5h1M376 642.5h1M377 642.5h1M378 642.5h1M380 642.5h1M381 642.5h1M383 642.5h1M384 642.5h1M385 642.5h1M387 641.5h1M388 641.5h1M389 642.5h1M391 642.5h1M392 642.5h1M393 642.5h1M395 642.5h1M396 642.5h1M398 641.5h1M399 641.5h1M400 642.5h1M402 642.5h1M403 642.5h1M404 642.5h1M406 642.5h1M407 642.5h1M408 642.5h1M410 642.5h1M411 643.5h1M412 643.5h1M414 643.5h1M415 642.5h1M417 642.5h1M418 642.5h1M419 642.5h1M421 642.5h1M422 641.5h1M423 641.5h1M425 642.5h1M426 642.5h1M427 642.5h1M429 642.5h1M430 642.5h1M432 642.5h1M433 642.5h1M434 642.5h1M436 642.5h1M437 642.5h1M438 642.5h1M440 642.5h1M441 642.5h1M442 642.5h1M444 642.5h1M445 642.5h1M447 642.5h1M448 642.5h1M449 642.5h1M451 642.5h1M452 642.5h1M453 642.5h1M455 642.5h1M456 642.5h1M457 642.5h1M459 642.5h1M460 642.5h1M462 642.5h1M463 642.5h1M464 642.5h1M466 642.5h1M467 642.5h1M468 642.5h1M470 642.5h1M471 642.5h1M472 642.5h1M474 642.5h1M475 642.5h1M476 642.5h1M478 642.5h1M479 642.5h1M481 642.5h1M482 642.5h1M483 642.5h1M485 642.5h1M486 642.5h1M487 642.5h1M489 642.5h1M490 641.5h1M491 642.5h1M493 642.5h1M494 642.5h1M496 642.5h1M497 642.5h1M498 642.5h1M500 642.5h1M501 642.5h1M502 642.5h1M504 642.5h1M505 642.5h1M506 642.5h1M508 642.5h1M509 642.5h1M511 642.5h1M512 642.5h1M513 642.5h1M515 642.5h1M516 642.5h1M517 642.5h1M519 642.5h1M520 642.5h1M521 642.5h1M523 642.5h1M524 642.5h1M526 642.5h1M527 642.5h1M528 642.5h1M530 642.5h1M531 642.5h1M532 642.5h1M534 642.5h1M535 642.5h1M536 642.5h1M538 642.5h1M539 642.5h1M540 642.5h1M542 642.5h1M543 642.5h1M545 642.5h1M546 642.5h1M547 643.5h1M549 642.5h1M550 642.5h1M551 642.5h1M553 642.5h1M554 642.5h1M555 642.5h1M557 642.5h1M558 642.5h1M560 642.5h1M561 642.5h1M562 642.5h1M564 642.5h1M565 642.5h1M566 642.5h1M568 643.5h1M569 642.5h1M570 642.5h1M572 642.5h1M573 642.5h1M575 642.5h1M576 642.5h1M577 643.5h1M579 642.5h1M580 642.5h1M581 642.5h1M583 642.5h1M584 642.5h1M585 642.5h1M587 642.5h1M588 642.5h1M590 642.5h1M591 642.5h1M592 642.5h1M594 642.5h1M595 642.5h1M596 642.5h1M598 642.5h1M599 642.5h1M600 642.5h1M602 642.5h1M603 642.5h1M604 642.5h1M606 642.5h1M607 642.5h1M609 642.5h1M610 642.5h1M611 642.5h1M613 642.5h1M614 642.5h1M615 642.5h1M617 642.5h1M618 642.5h1M619 642.5h1M621 642.5h1M622 642.5h1M624 642.5h1M625 642.5h1M626 642.5h1M628 642.5h1M629 642.5h1M630 642.5h1M632 642.5h1M633 642.5h1M634 642.5h1M636 642.5h1M637 642.5h1M639 641.5h1M640 641.5h1M641 641.5h1M643 641.5h1M644 641.5h1M645 641.5h1M647 641.5h1M648 641.5h1M649 641.5h1M651 641.5h1M652 641.5h1M654 641.5h1M655 641.5h1M656 641.5h1M658 641.5h1M659 641.5h1M660 641.5h1M662 641.5h1M663 641.5h1M664 641.5h1M666 641.5h1M667 641.5h1M668 641.5h1M670 641.5h1M671 641.5h1M673 641.5h1M674 641.5h1M675 641.5h1M677 641.5h1M678 641.5h1M679 641.5h1M681 641.5h1M682 641.5h1M683 641.5h1M685 641.5h1M686 641.5h1M688 641.5h1M689 641.5h1M690 641.5h1M692 641.5h1M693 641.5h1M694 641.5h1M696 641.5h1M697 641.5h1M698 641.5h1M700 641.5h1M701 641.5h1M703 641.5h1M704 641.5h1M705 641.5h1M707 641.5h1M708 641.5h1M709 641.5h1M711 641.5h1M712 641.5h1M713 641.5h1M715 641.5h1M716 641.5h1M718 641.5h1M719 641.5h1M720 641.5h1M722 641.5h1M723 641.5h1M724 641.5h1M726 641.5h1M727 641.5h1M728 639.5h1M730 641.5h1M731 641.5h1M732 641.5h1M734 641.5h1M735 642.5h1M737 642.5h1M738 642.5h1M739 642.5h1M741 641.5h1M742 639.5h1M743 639.5h1M745 641.5h1M746 641.5h1M747 641.5h1M749 641.5h1M750 641.5h1M752 641.5h1M753 641.5h1M754 641.5h1M756 641.5h1M757 641.5h1M758 641.5h1M760 641.5h1M761 641.5h1M762 641.5h1M764 641.5h1M765 641.5h1M767 641.5h1M768 641.5h1M769 641.5h1M771 641.5h1M772 641.5h1M773 641.5h1M775 641.5h1M776 641.5h1M777 641.5h1M779 641.5h1M780 641.5h1M782 641.5h1M783 641.5h1M784 641.5h1M786 641.5h1M787 641.5h1M788 641.5h1M790 641.5h1M791 641.5h1M792 641.5h1M794 641.5h1M795 641.5h1M796 641.5h1M798 641.5h1M799 641.5h1M801 641.5h1M802 641.5h1M803 641.5h1M805 641.5h1M806 641.5h1M807 641.5h1M809 641.5h1M810 641.5h1M811 641.5h1M813 641.5h1M814 641.5h1M816 641.5h1M817 641.5h1M818 641.5h1M820 641.5h1M821 641.5h1M822 641.5h1M824 641.5h1M825 641.5h1M826 641.5h1M828 641.5h1M829 641.5h1M831 641.5h1M832 641.5h1M833 641.5h1M835 641.5h1M836 641.5h1M837 641.5h1M839 641.5h1M840 641.5h1M841 641.5h1M843 641.5h1M844 641.5h1M846 641.5h1M169 661.5h1M170 661.5h1M171 662.5h1M173 662.5h1M174 661.5h1M175 661.5h1M177 661.5h1M178 661.5h1M179 661.5h1M181 661.5h1M182 661.5h1M184 661.5h1M185 661.5h1M186 661.5h1M188 661.5h1M189 661.5h1M190 662.5h1M192 662.5h1M193 661.5h1M194 662.5h1M196 661.5h1M197 661.5h1M199 659.5h1M200 659.5h1M201 659.5h1M203 662.5h1M204 661.5h1M205 661.5h1M207 661.5h1M208 661.5h1M209 661.5h1M211 661.5h1M212 661.5h1M213 661.5h1M215 661.5h1M216 661.5h1M218 661.5h1M219 661.5h1M220 661.5h1M222 661.5h1M223 662.5h1M224 661.5h1M226 661.5h1M227 661.5h1M228 661.5h1M230 661.5h1M231 661.5h1M233 661.5h1M234 661.5h1M235 661.5h1M237 661.5h1M238 661.5h1M239 661.5h1M241 662.5h1M242 661.5h1M243 661.5h1M256 660.5h1M257 660.5h1M258 660.5h1M260 660.5h1M261 660.5h1M262 658.5h1M264 660.5h1M265 660.5h1M266 660.5h1M268 660.5h1M269 661.5h1M271 661.5h1M272 660.5h1M273 660.5h1M275 660.5h1M276 660.5h1M277 660.5h1M279 660.5h1M280 661.5h1M281 660.5h1M283 660.5h1M284 660.5h1M286 660.5h1M287 660.5h1M288 660.5h1M290 659.5h1M291 659.5h1M292 659.5h1M294 659.5h1M295 659.5h1M296 659.5h1M298 659.5h1M299 659.5h1M300 659.5h1M302 659.5h1M303 659.5h1M305 659.5h1M306 659.5h1M307 659.5h1M309 659.5h1M310 659.5h1M311 659.5h1M313 659.5h1M314 659.5h1M315 659.5h1M317 659.5h1M318 659.5h1M320 659.5h1M321 659.5h1M322 659.5h1M324 659.5h1M325 659.5h1M338 659.5h1M339 659.5h1M340 659.5h1M342 659.5h1M343 659.5h1M344 659.5h1M346 659.5h1M347 659.5h1M348 659.5h1M350 659.5h1M351 659.5h1M353 659.5h1M354 659.5h1M355 659.5h1M357 659.5h1M358 659.5h1M359 659.5h1M361 664.5h1M362 664.5h1M363 664.5h1M365 664.5h1M366 664.5h1M368 664.5h1M369 664.5h1M370 664.5h1M372 664.5h1M373 664.5h1M374 664.5h1M376 664.5h1M377 664.5h1M378 664.5h1M405 664.5h1M428 657.5h1M429 657.5h1M430 660.5h1M432 658.5h1M433 658.5h1M434 660.5h1M436 660.5h1M437 660.5h1M438 660.5h1M440 660.5h1M441 660.5h1M443 660.5h1M444 660.5h1M445 660.5h1M447 660.5h1M448 660.5h1M449 660.5h1M451 660.5h1M452 660.5h1M453 660.5h1M455 660.5h1M456 660.5h1M458 660.5h1M459 660.5h1M460 660.5h1M462 660.5h1M463 660.5h1M464 660.5h1M466 660.5h1M467 660.5h1M574 659.5h1M816 659.5h1" stroke="#000" stroke-width="1" fill="none" shape-rendering="crispEdges"/></svg>
<div class="a" style="left:5px;top:679px;width:899px;height:16px;background:#7a8a99;"></div>
<div class="a" style="left:6px;top:680px;width:432px;height:14px;background:#eee;border-top:1px solid #c3d2e2"></div>
<div class="a" style="left:439px;top:679px;width:1px;height:16px;background:#fff;"></div>
<div class="a" style="left:471px;top:679px;width:1px;height:16px;background:#fff;"></div>
<div class="a" style="left:440px;top:680px;width:30px;height:14px;background:#eee;"></div>
<div class="a" style="left:455px;top:680px;width:1px;height:14px;background:#fff;"></div>
<div class="a" style="left:439px;top:679px;width:1px;height:1px;background:#eee;"></div>
<div class="a" style="left:471px;top:679px;width:1px;height:1px;background:#eee;"></div>
<div class="a" style="left:472px;top:680px;width:431px;height:14px;background:#eee;border-top:1px solid #c3d2e2"></div>
<svg class="a" style="left:440px;top:680px" width="30" height="14"><path d="M6 3L10 7L6 11Z" fill="#333"/><path d="M25 3L21 7L25 11Z" fill="#333"/></svg>
<div class="btn" style="left:193px;top:701px;width:79px;height:26px"><span style="top:6px;line-height:14px">Refresh</span></div>
<div class="t" style="left:281px;top:708px;">Indicator:</div>
<div class="btn" style="left:348px;top:701px;width:162px;height:25px"></div>
<div class="a" style="left:490px;top:702px;width:1px;height:23px;background:#7a8a99;"></div>
<div class="a" style="left:491px;top:702px;width:1px;height:23px;background:#fff;"></div>
<div class="a" style="left:350px;top:703px;width:139px;height:21px;background:#eee;"></div>
<div class="t" style="left:351px;top:708px;font-weight:normal;-webkit-text-stroke-width:0">---</div>
<svg class="a" style="left:495px;top:711px" width="10" height="6"><path d="M0 0H10L5 5Z" fill="#333"/></svg>
<div class="t" style="left:520px;top:708px;">Overview:</div>
<div class="btn" style="left:589px;top:701px;width:136px;height:25px"></div>
<div class="a" style="left:705px;top:702px;width:1px;height:23px;background:#7a8a99;"></div>
<div class="a" style="left:706px;top:702px;width:1px;height:23px;background:#fff;"></div>
<div class="a" style="left:591px;top:703px;width:113px;height:21px;background:#a3b8cc;border:1px solid #93a8bc"></div>
<div class="t" style="left:593px;top:707px;font-weight:bold">Symptom-Score</div>
<svg class="a" style="left:710px;top:711px" width="10" height="6"><path d="M0 0H10L5 5Z" fill="#333"/></svg>
<div class="btn" style="left:736px;top:701px;width:74px;height:26px"><span style="top:6px;line-height:14px">Detail...</span></div>
<div class="t" style="left:819px;top:708px;">Sort by:</div>
<div class="btn" style="left:873px;top:701px;width:31px;height:25px"></div>
<div class="a" style="left:884px;top:702px;width:1px;height:23px;background:#7a8a99;"></div>
<div class="a" style="left:885px;top:702px;width:1px;height:23px;background:#fff;"></div>
<div class="a" style="left:875px;top:703px;width:8px;height:21px;background:#eee;"></div>
<svg class="a" style="left:889px;top:711px" width="10" height="6"><path d="M0 0H10L5 5Z" fill="#333"/></svg>
<svg class="a" style="left:905px;top:29px" width="8" height="699" shape-rendering="crispEdges"><defs><pattern id="dv" x="2" y="10" width="4" height="4" patternUnits="userSpaceOnUse"><rect x="1" y="1" width="1" height="1" fill="#8494a5"/><rect x="0" y="0" width="1" height="1" fill="#fff"/><rect x="3" y="3" width="1" height="1" fill="#8494a5"/><rect x="2" y="2" width="1" height="1" fill="#fff"/></pattern></defs><rect width="8" height="699" fill="#eee"/><rect width="1" height="699" fill="#fff"/><rect x="2" y="10" width="4" height="687" fill="url(#dv)"/><g shape-rendering="geometricPrecision"><path d="M5 3L1 7L5 11Z" fill="#5b7fc8"/><path d="M5 3L1 7" stroke="#222" stroke-width="1" fill="none"/><path d="M1 15L5 19L1 23Z" fill="#5b7fc8"/><path d="M1.500 15V23" stroke="#222" stroke-width="1" fill="none"/></g></svg>
<div class="a" style="left:913px;top:28px;width:183px;height:1px;background:#7a8a99;"></div>
<div class="a" style="left:913px;top:28px;width:1px;height:700px;background:#7a8a99;"></div>
<div class="a" style="left:914px;top:50px;width:181px;height:677px;background:#6382bf;"></div>
<div class="a" style="left:915px;top:51px;width:179px;height:675px;background:#c8ddf2;"></div>
<div class="a" style="left:916px;top:54px;width:176px;height:670px;background:#eee;"></div>
<svg class="a" style="left:914px;top:29px" width="182" height="26"><path d="M2.500 21.500V8.500L8.500 2.500H66.500V21.500" fill="#eee" stroke="#7a8a99"/><path d="M3.500 21V9L9 3.500H66" fill="none" stroke="#fff"/><path d="M67.500 22V8.500L73.500 2.500H114.500V22" fill="#c8ddf2" stroke="#6382bf"/><rect x="68" y="21" width="46" height="4" fill="#c8ddf2"/><path d="M0.500 21.500H67.500" stroke="#6382bf" fill="none"/></svg>
<div class="t" style="left:926px;top:34px;">Journal</div>
<div class="t" style="left:989px;top:34px;">Filter</div>
<div class="a" style="left:916px;top:54px;width:175px;height:638px;background:#7a8a99;"></div>
<div class="a" style="left:917px;top:55px;width:158px;height:636px;background:#eee;"></div>
<div class="a" style="left:1075px;top:55px;width:15px;height:636px;background:#7a8a99;"></div>
<div class="a" style="left:1076px;top:55px;width:14px;height:636px;background:#eee;"></div>
<div class="a" style="left:1076px;top:55px;width:14px;height:15px;background:#eee;border-bottom:1px solid #7a8a99;border-left:1px solid #fff;border-top:1px solid #fff"></div>
<div class="a" style="left:1076px;top:675px;width:14px;height:16px;background:#eee;border-top:1px solid #7a8a99;border-left:1px solid #fff"></div>
<div class="a" style="left:1075px;top:70px;width:16px;height:66px;background:#6382bf;"></div>
<div class="a" style="left:1076px;top:71px;width:14px;height:64px;background:linear-gradient(to right,#cfe0f3 0%,#fff 35%,#dde8f3 62%,#b8cfe5 100%);"></div>
<div class="a" style="left:1079px;top:101px;width:9px;height:1px;background:#6382bf;"></div>
<div class="a" style="left:1079px;top:103px;width:9px;height:1px;background:#6382bf;"></div>
<div class="a" style="left:1079px;top:105px;width:9px;height:1px;background:#6382bf;"></div>
<svg class="a" style="left:1079px;top:60px" width="8" height="4"><path d="M0 4H8L4 0Z" fill="#333"/></svg>
<svg class="a" style="left:1079px;top:682px" width="8" height="4"><path d="M0 0H8L4 4Z" fill="#333"/></svg>
<svg width="0" height="0" class="a"><defs><pattern id="sp" x="14" y="3" width="4" height="4" patternUnits="userSpaceOnUse"><rect width="4" height="4" fill="#a3b8cc"/><rect x="1" y="1" width="1" height="1" fill="#6382bf"/><rect x="0" y="0" width="1" height="1" fill="#dbe5ef"/><rect x="3" y="3" width="1" height="1" fill="#6382bf"/><rect x="2" y="2" width="1" height="1" fill="#dbe5ef"/></pattern></defs></svg>
<div class="grp" style="top:64px;height:27px"><b>Fev1</b></div>
<svg class="a" style="left:923px;top:77px" width="145" height="9"><rect x="10" y="0" width="126" height="9" fill="#6382bf"/><rect x="11" y="1" width="124" height="7" fill="#a3b8cc"/><rect x="14" y="3" width="118" height="4" fill="url(#sp)"/><rect x="0" y="0" width="10" height="9" fill="#7a8a99"/><rect x="1" y="1" width="9" height="7" fill="#fff"/><path d="M5 2.500L7.500 4.500L5 6.500Z" fill="#222"/><rect x="136" y="0" width="9" height="9" fill="#7a8a99"/><rect x="136" y="1" width="8" height="7" fill="#fff"/><path d="M141.500 2.500L139 4.500L141.500 6.500Z" fill="#222"/></svg>
<div class="grp" style="top:102px;height:27px"><b>Fev1 <i>%</i></b></div>
<svg class="a" style="left:923px;top:115px" width="145" height="9"><rect x="10" y="0" width="126" height="9" fill="#6382bf"/><rect x="11" y="1" width="124" height="7" fill="#a3b8cc"/><rect x="14" y="3" width="118" height="4" fill="url(#sp)"/><rect x="0" y="0" width="10" height="9" fill="#7a8a99"/><rect x="1" y="1" width="9" height="7" fill="#fff"/><path d="M5 2.500L7.500 4.500L5 6.500Z" fill="#222"/><rect x="136" y="0" width="9" height="9" fill="#7a8a99"/><rect x="136" y="1" width="8" height="7" fill="#fff"/><path d="M141.500 2.500L139 4.500L141.500 6.500Z" fill="#222"/></svg>
<div class="grp" style="top:140px;height:27px"><b>Pev</b></div>
<svg class="a" style="left:923px;top:153px" width="145" height="9"><rect x="10" y="0" width="126" height="9" fill="#6382bf"/><rect x="11" y="1" width="124" height="7" fill="#a3b8cc"/><rect x="14" y="3" width="118" height="4" fill="url(#sp)"/><rect x="0" y="0" width="10" height="9" fill="#7a8a99"/><rect x="1" y="1" width="9" height="7" fill="#fff"/><path d="M5 2.500L7.500 4.500L5 6.500Z" fill="#222"/><rect x="136" y="0" width="9" height="9" fill="#7a8a99"/><rect x="136" y="1" width="8" height="7" fill="#fff"/><path d="M141.500 2.500L139 4.500L141.500 6.500Z" fill="#222"/></svg>
<div class="grp" style="top:178px;height:27px"><b>Fef75</b></div>
<svg class="a" style="left:923px;top:191px" width="145" height="9"><rect x="10" y="0" width="126" height="9" fill="#6382bf"/><rect x="11" y="1" width="124" height="7" fill="#a3b8cc"/><rect x="14" y="3" width="118" height="4" fill="url(#sp)"/><rect x="0" y="0" width="10" height="9" fill="#7a8a99"/><rect x="1" y="1" width="9" height="7" fill="#fff"/><path d="M5 2.500L7.500 4.500L5 6.500Z" fill="#222"/><rect x="136" y="0" width="9" height="9" fill="#7a8a99"/><rect x="136" y="1" width="8" height="7" fill="#fff"/><path d="M141.500 2.500L139 4.500L141.500 6.500Z" fill="#222"/></svg>
<div class="grp" style="top:216px;height:27px"><b>Fef2575</b></div>
<svg class="a" style="left:923px;top:229px" width="145" height="9"><rect x="10" y="0" width="126" height="9" fill="#6382bf"/><rect x="11" y="1" width="124" height="7" fill="#a3b8cc"/><rect x="14" y="3" width="118" height="4" fill="url(#sp)"/><rect x="0" y="0" width="10" height="9" fill="#7a8a99"/><rect x="1" y="1" width="9" height="7" fill="#fff"/><path d="M5 2.500L7.500 4.500L5 6.500Z" fill="#222"/><rect x="136" y="0" width="9" height="9" fill="#7a8a99"/><rect x="136" y="1" width="8" height="7" fill="#fff"/><path d="M141.500 2.500L139 4.500L141.500 6.500Z" fill="#222"/></svg>
<div class="grp" style="top:254px;height:27px"><b>Fet</b></div>
<svg class="a" style="left:923px;top:267px" width="145" height="9"><rect x="10" y="0" width="126" height="9" fill="#6382bf"/><rect x="11" y="1" width="124" height="7" fill="#a3b8cc"/><rect x="14" y="3" width="118" height="4" fill="url(#sp)"/><rect x="0" y="0" width="10" height="9" fill="#7a8a99"/><rect x="1" y="1" width="9" height="7" fill="#fff"/><path d="M5 2.500L7.500 4.500L5 6.500Z" fill="#222"/><rect x="136" y="0" width="9" height="9" fill="#7a8a99"/><rect x="136" y="1" width="8" height="7" fill="#fff"/><path d="M141.500 2.500L139 4.500L141.500 6.500Z" fill="#222"/></svg>
<div class="grp" style="top:292px;height:27px"><b>Symptom-Score</b></div>
<svg class="a" style="left:923px;top:305px" width="145" height="9"><rect x="10" y="0" width="126" height="9" fill="#6382bf"/><rect x="11" y="1" width="124" height="7" fill="#a3b8cc"/><rect x="14" y="3" width="118" height="4" fill="url(#sp)"/><rect x="0" y="0" width="10" height="9" fill="#7a8a99"/><rect x="1" y="1" width="9" height="7" fill="#fff"/><path d="M5 2.500L7.500 4.500L5 6.500Z" fill="#222"/><rect x="136" y="0" width="9" height="9" fill="#7a8a99"/><rect x="136" y="1" width="8" height="7" fill="#fff"/><path d="M141.500 2.500L139 4.500L141.500 6.500Z" fill="#222"/></svg>
<div class="grp" style="top:330px;height:89px"><b>Coughing</b></div>
<div class="cb" style="top:349px"></div>
<svg class="a" style="left:929px;top:351px" width="9" height="9"><path d="M1.300 3.600L2.900 7.300L7.800 1.500" stroke="#111" stroke-width="1.900" fill="none"/></svg>
<div class="cbl" style="top:349px">no</div>
<div class="cb" style="top:373px"></div>
<svg class="a" style="left:929px;top:375px" width="9" height="9"><path d="M1.300 3.600L2.900 7.300L7.800 1.500" stroke="#111" stroke-width="1.900" fill="none"/></svg>
<div class="cbl" style="top:373px">med</div>
<div class="cb" style="top:397px"></div>
<svg class="a" style="left:929px;top:399px" width="9" height="9"><path d="M1.300 3.600L2.900 7.300L7.800 1.500" stroke="#111" stroke-width="1.900" fill="none"/></svg>
<div class="cbl" style="top:397px">max</div>
<div class="grp" style="top:430px;height:89px"><b>Gasping</b></div>
<div class="cb" style="top:449px"></div>
<svg class="a" style="left:929px;top:451px" width="9" height="9"><path d="M1.300 3.600L2.900 7.300L7.800 1.500" stroke="#111" stroke-width="1.900" fill="none"/></svg>
<div class="cbl" style="top:449px">no</div>
<div class="cb" style="top:473px"></div>
<svg class="a" style="left:929px;top:475px" width="9" height="9"><path d="M1.300 3.600L2.900 7.300L7.800 1.500" stroke="#111" stroke-width="1.900" fill="none"/></svg>
<div class="cbl" style="top:473px">med</div>
<div class="cb" style="top:497px"></div>
<svg class="a" style="left:929px;top:499px" width="9" height="9"><path d="M1.300 3.600L2.900 7.300L7.800 1.500" stroke="#111" stroke-width="1.900" fill="none"/></svg>
<div class="cbl" style="top:497px">max</div>
<div class="grp" style="top:530px;height:89px"><b>Sputum production</b></div>
<div class="cb" style="top:549px"></div>
<svg class="a" style="left:929px;top:551px" width="9" height="9"><path d="M1.300 3.600L2.900 7.300L7.800 1.500" stroke="#111" stroke-width="1.900" fill="none"/></svg>
<div class="cbl" style="top:549px">no</div>
<div class="cb" style="top:573px"></div>
<svg class="a" style="left:929px;top:575px" width="9" height="9"><path d="M1.300 3.600L2.900 7.300L7.800 1.500" stroke="#111" stroke-width="1.900" fill="none"/></svg>
<div class="cbl" style="top:573px">med</div>
<div class="cb" style="top:597px"></div>
<svg class="a" style="left:929px;top:599px" width="9" height="9"><path d="M1.300 3.600L2.900 7.300L7.800 1.500" stroke="#111" stroke-width="1.900" fill="none"/></svg>
<div class="cbl" style="top:597px">max</div>
<div class="a" style="left:917px;top:623px;width:158px;height:68px;overflow:hidden"><div class="grp" style="left:3px;top:7px;height:89px"><b>Sleep disturbance</b></div></div>
<div class="cb" style="top:649px"></div>
<svg class="a" style="left:929px;top:651px" width="9" height="9"><path d="M1.300 3.600L2.900 7.300L7.800 1.500" stroke="#111" stroke-width="1.900" fill="none"/></svg>
<div class="cbl" style="top:649px">no</div>
<div class="cb" style="top:673px"></div>
<svg class="a" style="left:929px;top:675px" width="9" height="9"><path d="M1.300 3.600L2.900 7.300L7.800 1.500" stroke="#111" stroke-width="1.900" fill="none"/></svg>
<div class="cbl" style="top:673px">med</div>
<div class="btn" style="left:946px;top:698px;width:117px;height:26px"><span style="top:6px;line-height:14px">Create group...</span></div>
</div></body></html>
